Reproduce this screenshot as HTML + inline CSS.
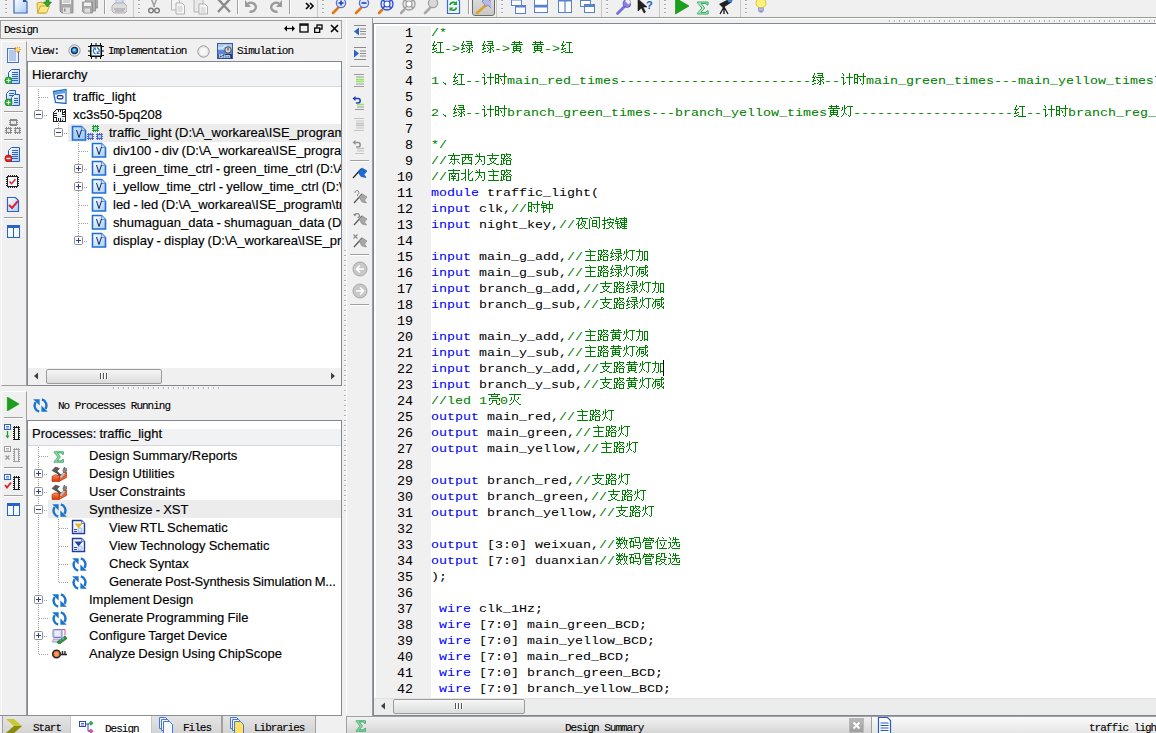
<!DOCTYPE html>
<html><head><meta charset="utf-8">
<style>
*{margin:0;padding:0;box-sizing:border-box}
html,body{width:1156px;height:733px;overflow:hidden;background:#f0f0f0;position:relative;font-family:"Liberation Sans",sans-serif;font-size:13px;color:#000}
.a{position:absolute}
.mono{white-space:nowrap;font-family:"Liberation Mono",monospace;font-size:11px;letter-spacing:-1px;line-height:12px;-webkit-text-stroke:.1px #000}
svg{display:block}
/* code */
#ed{position:absolute;left:373px;top:23px;width:783px;height:693px;background:#fff;border-top:1px solid #7e8793;border-left:1px solid #7e8793;border-bottom:1px solid #7e8793;overflow:hidden}
#gut{position:absolute;left:376px;top:26px;width:55px;height:672px;background:#f0f0f0}
.ln{position:absolute;left:0;width:1156px;height:16px;line-height:16px;white-space:pre}
.ln b{position:absolute;left:374px;top:2px;width:39px;text-align:right;font-weight:normal;font-family:"Liberation Mono",monospace;font-size:13.3333px;color:#000;-webkit-text-stroke:.05px #000}
.ln p{position:absolute;left:431px;top:1px;font-family:"Liberation Mono",monospace;font-size:13.3333px;color:#000;-webkit-text-stroke:.05px currentColor}
.k{color:#0000ff}.c{color:#008000}.t{color:#000}
.ln p i{display:inline-block;font-style:normal;transform:scaleY(.84);transform-origin:0 11.56px}
.cj{display:inline-block;width:13px;height:16px;vertical-align:top;fill:#008000}
/* tree */
.tr{position:absolute;height:20px;line-height:20px;white-space:nowrap;font-size:13px;color:#000;word-spacing:-.5px;-webkit-text-stroke:.15px #000}
.dl{position:absolute;border-left:1px dotted #a0a0a0}
.dh{position:absolute;border-top:1px dotted #a0a0a0}
.pm{position:absolute;width:9px;height:9px;border:1px solid #919191;border-radius:1px;background:linear-gradient(#fff,#e6e6e6)}
.pm:before{content:"";position:absolute;left:1px;top:3px;width:5px;height:1px;background:#2d4fa3}
.pm.p:after{content:"";position:absolute;left:3px;top:1px;width:1px;height:5px;background:#2d4fa3}
</style></head><body>
<svg width="0" height="0" style="position:absolute"><defs><symbol id="g0" viewBox="0 0 13 16"><path transform="translate(1,-2)" d="M2 2h1v1h-1zM2 3h1v1h-1zM5 3h6v1h-6zM1 4h1v1h-1zM8 4h1v1h-1zM1 5h1v1h-1zM4 5h1v1h-1zM8 5h1v1h-1zM0 6h4v1h-4zM8 6h1v1h-1zM2 7h1v1h-1zM8 7h1v1h-1zM1 8h1v1h-1zM8 8h1v1h-1zM1 9h1v1h-1zM3 9h2v1h-2zM8 9h1v1h-1zM0 10h3v1h-3zM8 10h1v1h-1zM4 11h1v1h-1zM8 11h1v1h-1zM2 12h2v1h-2zM8 12h1v1h-1zM0 13h2v1h-2zM4 13h8v1h-8z"/></symbol><symbol id="g1" viewBox="0 0 13 16"><path transform="translate(1,-2)" d="M2 2h1v1h-1zM5 2h6v1h-6zM2 3h1v1h-1zM10 3h1v1h-1zM1 4h1v1h-1zM6 4h5v1h-5zM1 5h1v1h-1zM3 5h1v1h-1zM10 5h1v1h-1zM0 6h3v1h-3zM4 6h8v1h-8zM2 7h1v1h-1zM8 7h1v1h-1zM1 8h1v1h-1zM5 8h1v1h-1zM8 8h1v1h-1zM10 8h2v1h-2zM1 9h3v1h-3zM6 9h1v1h-1zM8 9h2v1h-2zM0 10h2v1h-2zM7 10h2v1h-2zM10 10h1v1h-1zM6 11h1v1h-1zM8 11h1v1h-1zM11 11h1v1h-1zM2 12h2v1h-2zM5 12h1v1h-1zM8 12h1v1h-1zM11 12h1v1h-1zM0 13h2v1h-2zM7 13h2v1h-2z"/></symbol><symbol id="g2" viewBox="0 0 13 16"><path transform="translate(1,-2)" d="M3 2h1v1h-1zM8 2h1v1h-1zM1 3h10v1h-10zM3 4h1v1h-1zM8 4h1v1h-1zM0 5h12v1h-12zM5 6h1v1h-1zM2 7h8v1h-8zM2 8h1v1h-1zM5 8h1v1h-1zM9 8h1v1h-1zM2 9h8v1h-8zM2 10h1v1h-1zM5 10h1v1h-1zM9 10h1v1h-1zM2 11h8v1h-8zM3 12h1v1h-1zM8 12h1v1h-1zM1 13h2v1h-2zM9 13h2v1h-2z"/></symbol><symbol id="g3" viewBox="0 0 13 16"><path transform="translate(1,-2)" d="M3 11h1v1h-1zM4 12h2v1h-2zM5 13h1v1h-1z"/></symbol><symbol id="g4" viewBox="0 0 13 16"><path transform="translate(1,-2)" d="M1 2h1v1h-1zM8 2h1v1h-1zM2 3h1v1h-1zM8 3h1v1h-1zM2 4h1v1h-1zM8 4h1v1h-1zM8 5h1v1h-1zM0 6h3v1h-3zM5 6h7v1h-7zM2 7h1v1h-1zM8 7h1v1h-1zM2 8h1v1h-1zM8 8h1v1h-1zM2 9h1v1h-1zM8 9h1v1h-1zM2 10h1v1h-1zM8 10h1v1h-1zM2 11h1v1h-1zM4 11h1v1h-1zM8 11h1v1h-1zM2 12h2v1h-2zM8 12h1v1h-1zM2 13h1v1h-1zM8 13h1v1h-1z"/></symbol><symbol id="g5" viewBox="0 0 13 16"><path transform="translate(1,-2)" d="M9 2h1v1h-1zM0 3h4v1h-4zM9 3h1v1h-1zM0 4h1v1h-1zM3 4h1v1h-1zM9 4h1v1h-1zM0 5h1v1h-1zM3 5h9v1h-9zM0 6h1v1h-1zM3 6h1v1h-1zM9 6h1v1h-1zM0 7h4v1h-4zM5 7h1v1h-1zM9 7h1v1h-1zM0 8h1v1h-1zM3 8h1v1h-1zM6 8h1v1h-1zM9 8h1v1h-1zM0 9h1v1h-1zM3 9h1v1h-1zM6 9h1v1h-1zM9 9h1v1h-1zM0 10h1v1h-1zM3 10h1v1h-1zM9 10h1v1h-1zM0 11h4v1h-4zM9 11h1v1h-1zM0 12h1v1h-1zM3 12h1v1h-1zM7 12h1v1h-1zM9 12h1v1h-1zM8 13h1v1h-1z"/></symbol><symbol id="g6" viewBox="0 0 13 16"><path transform="translate(1,-2)" d="M3 2h1v1h-1zM3 3h1v1h-1zM6 3h6v1h-6zM1 4h1v1h-1zM3 4h1v1h-1zM5 4h1v1h-1zM9 4h1v1h-1zM1 5h1v1h-1zM3 5h2v1h-2zM9 5h1v1h-1zM1 6h1v1h-1zM3 6h1v1h-1zM9 6h1v1h-1zM0 7h1v1h-1zM3 7h1v1h-1zM9 7h1v1h-1zM3 8h1v1h-1zM9 8h1v1h-1zM3 9h1v1h-1zM9 9h1v1h-1zM2 10h1v1h-1zM4 10h1v1h-1zM9 10h1v1h-1zM2 11h1v1h-1zM5 11h1v1h-1zM9 11h1v1h-1zM1 12h1v1h-1zM7 12h1v1h-1zM9 12h1v1h-1zM0 13h1v1h-1zM8 13h1v1h-1z"/></symbol><symbol id="g7" viewBox="0 0 13 16"><path transform="translate(1,-2)" d="M5 2h1v1h-1zM5 3h1v1h-1zM0 4h12v1h-12zM4 5h1v1h-1zM6 5h1v1h-1zM3 6h1v1h-1zM6 6h1v1h-1zM3 7h1v1h-1zM6 7h1v1h-1zM2 8h9v1h-9zM6 9h1v1h-1zM3 10h1v1h-1zM6 10h1v1h-1zM9 10h1v1h-1zM2 11h1v1h-1zM6 11h1v1h-1zM10 11h1v1h-1zM1 12h1v1h-1zM4 12h1v1h-1zM6 12h1v1h-1zM11 12h1v1h-1zM5 13h1v1h-1z"/></symbol><symbol id="g8" viewBox="0 0 13 16"><path transform="translate(1,-2)" d="M0 3h12v1h-12zM4 4h1v1h-1zM7 4h1v1h-1zM4 5h1v1h-1zM7 5h1v1h-1zM1 6h10v1h-10zM1 7h1v1h-1zM4 7h1v1h-1zM7 7h1v1h-1zM10 7h1v1h-1zM1 8h1v1h-1zM4 8h1v1h-1zM7 8h1v1h-1zM10 8h1v1h-1zM1 9h1v1h-1zM3 9h1v1h-1zM8 9h3v1h-3zM1 10h2v1h-2zM10 10h1v1h-1zM1 11h1v1h-1zM10 11h1v1h-1zM1 12h10v1h-10zM1 13h1v1h-1zM10 13h1v1h-1z"/></symbol><symbol id="g9" viewBox="0 0 13 16"><path transform="translate(1,-2)" d="M5 2h1v1h-1zM2 3h1v1h-1zM5 3h1v1h-1zM3 4h1v1h-1zM5 4h1v1h-1zM1 5h10v1h-10zM5 6h1v1h-1zM10 6h1v1h-1zM5 7h1v1h-1zM10 7h1v1h-1zM5 8h2v1h-2zM10 8h1v1h-1zM4 9h1v1h-1zM7 9h1v1h-1zM10 9h1v1h-1zM4 10h1v1h-1zM7 10h1v1h-1zM10 10h1v1h-1zM3 11h1v1h-1zM10 11h1v1h-1zM2 12h1v1h-1zM10 12h1v1h-1zM1 13h1v1h-1zM8 13h2v1h-2z"/></symbol><symbol id="g10" viewBox="0 0 13 16"><path transform="translate(1,-2)" d="M5 2h1v1h-1zM5 3h1v1h-1zM0 4h12v1h-12zM5 5h1v1h-1zM5 6h1v1h-1zM2 7h8v1h-8zM3 8h1v1h-1zM8 8h1v1h-1zM3 9h1v1h-1zM7 9h1v1h-1zM4 10h1v1h-1zM6 10h1v1h-1zM5 11h2v1h-2zM3 12h2v1h-2zM7 12h2v1h-2zM0 13h3v1h-3zM9 13h3v1h-3z"/></symbol><symbol id="g11" viewBox="0 0 13 16"><path transform="translate(1,-2)" d="M6 2h1v1h-1zM1 3h4v1h-4zM6 3h5v1h-5zM1 4h1v1h-1zM4 4h1v1h-1zM6 4h1v1h-1zM10 4h1v1h-1zM1 5h1v1h-1zM4 5h2v1h-2zM7 5h1v1h-1zM9 5h1v1h-1zM1 6h1v1h-1zM4 6h1v1h-1zM8 6h1v1h-1zM1 7h4v1h-4zM6 7h2v1h-2zM9 7h2v1h-2zM3 8h1v1h-1zM5 8h1v1h-1zM11 8h1v1h-1zM1 9h1v1h-1zM3 9h2v1h-2zM6 9h5v1h-5zM1 10h1v1h-1zM3 10h1v1h-1zM6 10h1v1h-1zM10 10h1v1h-1zM1 11h1v1h-1zM3 11h1v1h-1zM6 11h1v1h-1zM10 11h1v1h-1zM1 12h1v1h-1zM3 12h2v1h-2zM6 12h1v1h-1zM10 12h1v1h-1zM0 13h3v1h-3zM6 13h5v1h-5z"/></symbol><symbol id="g12" viewBox="0 0 13 16"><path transform="translate(1,-2)" d="M5 2h1v1h-1zM0 3h12v1h-12zM5 4h1v1h-1zM5 5h1v1h-1zM1 6h10v1h-10zM1 7h1v1h-1zM3 7h1v1h-1zM7 7h1v1h-1zM10 7h1v1h-1zM1 8h1v1h-1zM4 8h1v1h-1zM6 8h1v1h-1zM10 8h1v1h-1zM1 9h1v1h-1zM3 9h5v1h-5zM10 9h1v1h-1zM1 10h1v1h-1zM5 10h1v1h-1zM10 10h1v1h-1zM1 11h1v1h-1zM3 11h5v1h-5zM10 11h1v1h-1zM1 12h1v1h-1zM5 12h1v1h-1zM10 12h1v1h-1zM1 13h1v1h-1zM5 13h1v1h-1zM8 13h3v1h-3z"/></symbol><symbol id="g13" viewBox="0 0 13 16"><path transform="translate(1,-2)" d="M4 2h1v1h-1zM7 2h1v1h-1zM4 3h1v1h-1zM7 3h1v1h-1zM4 4h1v1h-1zM7 4h1v1h-1zM11 4h1v1h-1zM4 5h1v1h-1zM7 5h1v1h-1zM10 5h1v1h-1zM0 6h5v1h-5zM7 6h1v1h-1zM9 6h1v1h-1zM4 7h1v1h-1zM7 7h2v1h-2zM4 8h1v1h-1zM7 8h1v1h-1zM4 9h1v1h-1zM7 9h1v1h-1zM3 10h2v1h-2zM7 10h1v1h-1zM2 11h1v1h-1zM4 11h1v1h-1zM7 11h1v1h-1zM11 11h1v1h-1zM0 12h2v1h-2zM4 12h1v1h-1zM7 12h1v1h-1zM11 12h1v1h-1zM4 13h1v1h-1zM8 13h4v1h-4z"/></symbol><symbol id="g14" viewBox="0 0 13 16"><path transform="translate(1,-2)" d="M5 2h1v1h-1zM6 3h1v1h-1zM1 4h11v1h-11zM6 5h1v1h-1zM6 6h1v1h-1zM6 7h1v1h-1zM2 8h9v1h-9zM6 9h1v1h-1zM6 10h1v1h-1zM6 11h1v1h-1zM6 12h1v1h-1zM1 13h11v1h-11z"/></symbol><symbol id="g15" viewBox="0 0 13 16"><path transform="translate(1,-2)" d="M1 2h1v1h-1zM8 2h1v1h-1zM1 3h1v1h-1zM8 3h1v1h-1zM1 4h4v1h-4zM8 4h1v1h-1zM0 5h1v1h-1zM5 5h7v1h-7zM0 6h6v1h-6zM8 6h1v1h-1zM11 6h1v1h-1zM2 7h1v1h-1zM5 7h1v1h-1zM8 7h1v1h-1zM11 7h1v1h-1zM0 8h6v1h-6zM8 8h1v1h-1zM11 8h1v1h-1zM2 9h1v1h-1zM5 9h7v1h-7zM2 10h1v1h-1zM8 10h1v1h-1zM2 11h1v1h-1zM4 11h1v1h-1zM8 11h1v1h-1zM2 12h2v1h-2zM8 12h1v1h-1zM2 13h1v1h-1zM8 13h1v1h-1z"/></symbol><symbol id="g16" viewBox="0 0 13 16"><path transform="translate(1,-2)" d="M5 2h1v1h-1zM0 3h12v1h-12zM3 4h1v1h-1zM6 4h1v1h-1zM3 5h1v1h-1zM6 5h1v1h-1zM2 6h1v1h-1zM6 6h4v1h-4zM2 7h1v1h-1zM5 7h1v1h-1zM9 7h1v1h-1zM1 8h2v1h-2zM5 8h1v1h-1zM7 8h1v1h-1zM9 8h1v1h-1zM0 9h1v1h-1zM2 9h1v1h-1zM4 9h2v1h-2zM8 9h1v1h-1zM2 10h2v1h-2zM6 10h1v1h-1zM8 10h1v1h-1zM2 11h1v1h-1zM7 11h1v1h-1zM2 12h1v1h-1zM6 12h1v1h-1zM8 12h1v1h-1zM2 13h1v1h-1zM4 13h2v1h-2zM9 13h3v1h-3z"/></symbol><symbol id="g17" viewBox="0 0 13 16"><path transform="translate(1,-2)" d="M1 2h1v1h-1zM4 2h7v1h-7zM2 3h1v1h-1zM10 3h1v1h-1zM0 4h1v1h-1zM10 4h1v1h-1zM0 5h1v1h-1zM3 5h5v1h-5zM10 5h1v1h-1zM0 6h1v1h-1zM3 6h1v1h-1zM7 6h1v1h-1zM10 6h1v1h-1zM0 7h1v1h-1zM3 7h1v1h-1zM7 7h1v1h-1zM10 7h1v1h-1zM0 8h1v1h-1zM3 8h5v1h-5zM10 8h1v1h-1zM0 9h1v1h-1zM3 9h1v1h-1zM7 9h1v1h-1zM10 9h1v1h-1zM0 10h1v1h-1zM3 10h1v1h-1zM7 10h1v1h-1zM10 10h1v1h-1zM0 11h1v1h-1zM3 11h5v1h-5zM10 11h1v1h-1zM0 12h1v1h-1zM8 12h1v1h-1zM10 12h1v1h-1zM0 13h1v1h-1zM9 13h1v1h-1z"/></symbol><symbol id="g18" viewBox="0 0 13 16"><path transform="translate(1,-2)" d="M2 2h1v1h-1zM7 2h1v1h-1zM2 3h1v1h-1zM8 3h1v1h-1zM2 4h1v1h-1zM5 4h7v1h-7zM0 5h6v1h-6zM11 5h1v1h-1zM2 6h1v1h-1zM8 6h1v1h-1zM2 7h1v1h-1zM5 7h7v1h-7zM2 8h2v1h-2zM7 8h1v1h-1zM10 8h1v1h-1zM0 9h3v1h-3zM6 9h1v1h-1zM10 9h1v1h-1zM2 10h1v1h-1zM7 10h1v1h-1zM9 10h1v1h-1zM2 11h1v1h-1zM8 11h2v1h-2zM2 12h1v1h-1zM7 12h1v1h-1zM10 12h1v1h-1zM1 13h2v1h-2zM4 13h3v1h-3zM11 13h1v1h-1z"/></symbol><symbol id="g19" viewBox="0 0 13 16"><path transform="translate(1,-2)" d="M1 2h1v1h-1zM9 2h1v1h-1zM1 3h1v1h-1zM4 3h8v1h-8zM1 4h3v1h-3zM6 4h1v1h-1zM9 4h1v1h-1zM11 4h1v1h-1zM0 5h1v1h-1zM5 5h1v1h-1zM7 5h5v1h-5zM0 6h4v1h-4zM5 6h1v1h-1zM9 6h1v1h-1zM11 6h1v1h-1zM2 7h1v1h-1zM5 7h7v1h-7zM0 8h5v1h-5zM6 8h1v1h-1zM9 8h1v1h-1zM2 9h1v1h-1zM6 9h6v1h-6zM2 10h1v1h-1zM4 10h1v1h-1zM6 10h1v1h-1zM9 10h1v1h-1zM2 11h1v1h-1zM5 11h1v1h-1zM7 11h5v1h-5zM2 12h2v1h-2zM5 12h2v1h-2zM9 12h1v1h-1zM2 13h1v1h-1zM4 13h1v1h-1zM7 13h5v1h-5z"/></symbol><symbol id="g20" viewBox="0 0 13 16"><path transform="translate(1,-2)" d="M3 2h1v1h-1zM3 3h1v1h-1zM0 4h7v1h-7zM8 4h4v1h-4zM3 5h1v1h-1zM6 5h1v1h-1zM8 5h1v1h-1zM11 5h1v1h-1zM3 6h1v1h-1zM6 6h1v1h-1zM8 6h1v1h-1zM11 6h1v1h-1zM3 7h1v1h-1zM6 7h1v1h-1zM8 7h1v1h-1zM11 7h1v1h-1zM3 8h1v1h-1zM6 8h1v1h-1zM8 8h1v1h-1zM11 8h1v1h-1zM2 9h1v1h-1zM6 9h1v1h-1zM8 9h1v1h-1zM11 9h1v1h-1zM2 10h1v1h-1zM6 10h1v1h-1zM8 10h1v1h-1zM11 10h1v1h-1zM2 11h1v1h-1zM6 11h1v1h-1zM8 11h1v1h-1zM11 11h1v1h-1zM1 12h1v1h-1zM6 12h1v1h-1zM8 12h4v1h-4zM0 13h1v1h-1zM4 13h2v1h-2zM8 13h1v1h-1zM11 13h1v1h-1z"/></symbol><symbol id="g21" viewBox="0 0 13 16"><path transform="translate(1,-2)" d="M9 2h2v1h-2zM0 3h1v1h-1zM9 3h1v1h-1zM11 3h1v1h-1zM1 4h1v1h-1zM3 4h9v1h-9zM3 5h1v1h-1zM9 5h1v1h-1zM2 6h6v1h-6zM9 6h1v1h-1zM1 7h1v1h-1zM3 7h1v1h-1zM9 7h1v1h-1zM11 7h1v1h-1zM1 8h1v1h-1zM3 8h1v1h-1zM5 8h3v1h-3zM9 8h1v1h-1zM11 8h1v1h-1zM0 9h1v1h-1zM3 9h1v1h-1zM5 9h1v1h-1zM7 9h1v1h-1zM9 9h2v1h-2zM0 10h1v1h-1zM3 10h1v1h-1zM5 10h3v1h-3zM9 10h1v1h-1zM0 11h1v1h-1zM3 11h1v1h-1zM8 11h2v1h-2zM11 11h1v1h-1zM2 12h1v1h-1zM7 12h1v1h-1zM10 12h2v1h-2zM1 13h1v1h-1zM5 13h2v1h-2zM11 13h1v1h-1z"/></symbol><symbol id="g22" viewBox="0 0 13 16"><path transform="translate(1,-2)" d="M6 2h1v1h-1zM0 3h12v1h-12zM3 4h1v1h-1zM9 4h1v1h-1zM3 5h7v1h-7zM1 7h11v1h-11zM1 8h1v1h-1zM11 8h1v1h-1zM1 9h1v1h-1zM4 9h5v1h-5zM11 9h1v1h-1zM4 10h1v1h-1zM8 10h1v1h-1zM4 11h1v1h-1zM8 11h1v1h-1zM3 12h1v1h-1zM8 12h1v1h-1zM11 12h1v1h-1zM1 13h2v1h-2zM9 13h3v1h-3z"/></symbol><symbol id="g23" viewBox="0 0 13 16"><path transform="translate(1,-2)" d="M0 3h12v1h-12zM5 4h1v1h-1zM5 5h1v1h-1zM2 6h1v1h-1zM5 6h1v1h-1zM9 6h1v1h-1zM2 7h1v1h-1zM5 7h1v1h-1zM9 7h1v1h-1zM2 8h1v1h-1zM5 8h1v1h-1zM8 8h1v1h-1zM1 9h1v1h-1zM4 9h1v1h-1zM6 9h1v1h-1zM4 10h1v1h-1zM7 10h1v1h-1zM3 11h1v1h-1zM8 11h1v1h-1zM2 12h1v1h-1zM9 12h1v1h-1zM0 13h2v1h-2zM10 13h2v1h-2z"/></symbol><symbol id="g24" viewBox="0 0 13 16"><path transform="translate(1,-2)" d="M0 2h1v1h-1zM3 2h1v1h-1zM6 2h1v1h-1zM8 2h1v1h-1zM1 3h1v1h-1zM3 3h1v1h-1zM5 3h1v1h-1zM8 3h1v1h-1zM0 4h7v1h-7zM8 4h1v1h-1zM2 5h3v1h-3zM7 5h5v1h-5zM1 6h1v1h-1zM3 6h1v1h-1zM5 6h1v1h-1zM7 6h1v1h-1zM10 6h1v1h-1zM0 7h1v1h-1zM3 7h1v1h-1zM6 7h1v1h-1zM8 7h1v1h-1zM10 7h1v1h-1zM0 8h7v1h-7zM8 8h1v1h-1zM10 8h1v1h-1zM2 9h1v1h-1zM4 9h1v1h-1zM8 9h1v1h-1zM10 9h1v1h-1zM1 10h1v1h-1zM4 10h1v1h-1zM9 10h1v1h-1zM2 11h2v1h-2zM9 11h1v1h-1zM2 12h1v1h-1zM4 12h1v1h-1zM8 12h1v1h-1zM10 12h1v1h-1zM0 13h2v1h-2zM5 13h1v1h-1zM7 13h1v1h-1zM11 13h1v1h-1z"/></symbol><symbol id="g25" viewBox="0 0 13 16"><path transform="translate(1,-2)" d="M5 2h6v1h-6zM0 3h5v1h-5zM10 3h1v1h-1zM2 4h1v1h-1zM6 4h1v1h-1zM10 4h1v1h-1zM2 5h1v1h-1zM6 5h1v1h-1zM10 5h1v1h-1zM1 6h4v1h-4zM6 6h1v1h-1zM10 6h1v1h-1zM0 7h2v1h-2zM4 7h1v1h-1zM6 7h6v1h-6zM1 8h1v1h-1zM4 8h1v1h-1zM11 8h1v1h-1zM1 9h1v1h-1zM4 9h1v1h-1zM11 9h1v1h-1zM1 10h1v1h-1zM4 10h6v1h-6zM11 10h1v1h-1zM1 11h4v1h-4zM11 11h1v1h-1zM1 12h1v1h-1zM4 12h1v1h-1zM8 12h1v1h-1zM11 12h1v1h-1zM9 13h2v1h-2z"/></symbol><symbol id="g26" viewBox="0 0 13 16"><path transform="translate(1,-2)" d="M2 2h1v1h-1zM7 2h1v1h-1zM2 3h4v1h-4zM7 3h5v1h-5zM1 4h1v1h-1zM4 4h1v1h-1zM6 4h1v1h-1zM9 4h1v1h-1zM1 5h11v1h-11zM1 6h1v1h-1zM11 6h1v1h-1zM0 7h1v1h-1zM3 7h6v1h-6zM10 7h1v1h-1zM3 8h1v1h-1zM8 8h1v1h-1zM3 9h6v1h-6zM3 10h1v1h-1zM3 11h7v1h-7zM3 12h1v1h-1zM9 12h1v1h-1zM3 13h7v1h-7z"/></symbol><symbol id="g27" viewBox="0 0 13 16"><path transform="translate(1,-2)" d="M3 2h1v1h-1zM7 2h1v1h-1zM3 3h1v1h-1zM8 3h1v1h-1zM2 4h1v1h-1zM2 5h1v1h-1zM4 5h8v1h-8zM1 6h2v1h-2zM0 7h1v1h-1zM2 7h1v1h-1zM5 7h1v1h-1zM9 7h1v1h-1zM2 8h1v1h-1zM5 8h1v1h-1zM9 8h1v1h-1zM2 9h1v1h-1zM6 9h1v1h-1zM9 9h1v1h-1zM2 10h1v1h-1zM6 10h1v1h-1zM8 10h1v1h-1zM2 11h1v1h-1zM8 11h1v1h-1zM2 12h1v1h-1zM7 12h1v1h-1zM2 13h1v1h-1zM4 13h8v1h-8z"/></symbol><symbol id="g28" viewBox="0 0 13 16"><path transform="translate(1,-2)" d="M1 2h1v1h-1zM5 2h1v1h-1zM7 2h1v1h-1zM2 3h1v1h-1zM5 3h1v1h-1zM7 3h1v1h-1zM2 4h1v1h-1zM5 4h6v1h-6zM4 5h1v1h-1zM7 5h1v1h-1zM7 6h1v1h-1zM0 7h3v1h-3zM4 7h8v1h-8zM2 8h1v1h-1zM6 8h1v1h-1zM8 8h1v1h-1zM2 9h1v1h-1zM6 9h1v1h-1zM8 9h1v1h-1zM11 9h1v1h-1zM2 10h1v1h-1zM5 10h1v1h-1zM8 10h1v1h-1zM11 10h1v1h-1zM2 11h1v1h-1zM4 11h1v1h-1zM9 11h3v1h-3zM1 12h1v1h-1zM3 12h1v1h-1zM0 13h1v1h-1zM4 13h8v1h-8z"/></symbol><symbol id="g29" viewBox="0 0 13 16"><path transform="translate(1,-2)" d="M3 2h2v1h-2zM6 2h4v1h-4zM1 3h2v1h-2zM6 3h1v1h-1zM9 3h1v1h-1zM1 4h1v1h-1zM6 4h1v1h-1zM9 4h1v1h-1zM1 5h4v1h-4zM6 5h1v1h-1zM9 5h1v1h-1zM1 6h1v1h-1zM5 6h1v1h-1zM9 6h3v1h-3zM1 7h4v1h-4zM1 8h1v1h-1zM5 8h6v1h-6zM1 9h1v1h-1zM5 9h1v1h-1zM9 9h1v1h-1zM1 10h4v1h-4zM6 10h1v1h-1zM9 10h1v1h-1zM0 11h2v1h-2zM7 11h2v1h-2zM1 12h1v1h-1zM6 12h1v1h-1zM9 12h1v1h-1zM1 13h1v1h-1zM4 13h2v1h-2zM10 13h2v1h-2z"/></symbol>
<linearGradient id="gdoc" x1="0" y1="0" x2="1" y2="1"><stop offset="0" stop-color="#ffffff"/><stop offset="1" stop-color="#a9cdf5"/></linearGradient>
<linearGradient id="gdoc2" x1="0" y1="0" x2="1" y2="1"><stop offset="0" stop-color="#f4f9ff"/><stop offset="1" stop-color="#b8d6f6"/></linearGradient>
<linearGradient id="gsel" x1="0" y1="0" x2="0" y2="1"><stop offset="0" stop-color="#c4def8"/><stop offset="1" stop-color="#a4cbf2"/></linearGradient>
<linearGradient id="gfold" x1="0" y1="0" x2="1" y2="1"><stop offset="0" stop-color="#fff4a8"/><stop offset="1" stop-color="#e0a81e"/></linearGradient>
<linearGradient id="gthumb" x1="0" y1="0" x2="0" y2="1"><stop offset="0" stop-color="#f3f3f3"/><stop offset=".5" stop-color="#e4e4e4"/><stop offset="1" stop-color="#d2d2d2"/></linearGradient>
<radialGradient id="gradio" cx=".45" cy=".4" r=".6"><stop offset="0" stop-color="#9fe0ff"/><stop offset=".6" stop-color="#1f8ad8"/><stop offset="1" stop-color="#0b4f98"/></radialGradient>
<linearGradient id="gbox" x1="0" y1="0" x2="0" y2="1"><stop offset="0" stop-color="#ff8c4a"/><stop offset="1" stop-color="#d63a10"/></linearGradient>
</defs></svg>

<!-- ===== top toolbar ===== -->
<div class="a" style="left:5px;top:0px;width:2px;height:16px;background:repeating-linear-gradient(#a8a8a8 0 1px,#fff 1px 2px,transparent 2px 4px)"></div>
<div class="a" style="left:138px;top:0px;width:2px;height:16px;background:repeating-linear-gradient(#a8a8a8 0 1px,#fff 1px 2px,transparent 2px 4px)"></div>
<div class="a" style="left:322px;top:0px;width:2px;height:16px;background:repeating-linear-gradient(#a8a8a8 0 1px,#fff 1px 2px,transparent 2px 4px)"></div>
<div class="a" style="left:501px;top:0px;width:2px;height:16px;background:repeating-linear-gradient(#a8a8a8 0 1px,#fff 1px 2px,transparent 2px 4px)"></div>
<div class="a" style="left:606px;top:0px;width:2px;height:16px;background:repeating-linear-gradient(#a8a8a8 0 1px,#fff 1px 2px,transparent 2px 4px)"></div>
<div class="a" style="left:664px;top:0px;width:2px;height:16px;background:repeating-linear-gradient(#a8a8a8 0 1px,#fff 1px 2px,transparent 2px 4px)"></div>
<div class="a" style="left:745px;top:0px;width:2px;height:16px;background:repeating-linear-gradient(#a8a8a8 0 1px,#fff 1px 2px,transparent 2px 4px)"></div>
<div class="a" style="left:133px;top:0px;width:1px;height:17px;background:#c8c8c8"></div>
<div class="a" style="left:317px;top:0px;width:1px;height:17px;background:#c8c8c8"></div>
<div class="a" style="left:496px;top:0px;width:1px;height:17px;background:#c8c8c8"></div>
<div class="a" style="left:601px;top:0px;width:1px;height:17px;background:#c8c8c8"></div>
<div class="a" style="left:659px;top:0px;width:1px;height:17px;background:#c8c8c8"></div>
<div class="a" style="left:740px;top:0px;width:1px;height:17px;background:#c8c8c8"></div>
<div class="a" style="left:104px;top:0px;width:1px;height:14px;background:#a0a0a0"></div><div class="a" style="left:105px;top:0px;width:1px;height:14px;background:#fff"></div>
<div class="a" style="left:237px;top:0px;width:1px;height:14px;background:#a0a0a0"></div><div class="a" style="left:238px;top:0px;width:1px;height:14px;background:#fff"></div>
<div class="a" style="left:289px;top:0px;width:1px;height:14px;background:#a0a0a0"></div><div class="a" style="left:290px;top:0px;width:1px;height:14px;background:#fff"></div>
<div class="a" style="left:468px;top:0px;width:1px;height:14px;background:#a0a0a0"></div><div class="a" style="left:469px;top:0px;width:1px;height:14px;background:#fff"></div>
<div class="a" style="left:472px;top:-4px;width:23px;height:20px;border:1px solid #6a6a6a;border-radius:3px;background:linear-gradient(#dcdcdc,#c8c8c8)"></div>
<svg class="a" style="left:13px;top:0px" width="16" height="16" viewBox="0 0 16 16"><path d="M1 -2h9l4 4v11H1z" fill="url(#gdoc)" stroke="#3a66c0" stroke-width="1.2"/><path d="M10 -2v4h4z" fill="#2550b0"/></svg>
<svg class="a" style="left:36px;top:0px" width="16" height="16" viewBox="0 0 16 16"><path d="M1 3l5-1 1 1.5 5-1v2L9.5 13H1.5z" fill="#f5e27a" stroke="#c9a028" stroke-width=".9"/><path d="M1.5 13l3-7h9l-3 7z" fill="#ffe98a" stroke="#c9a028" stroke-width=".9"/><path d="M10 -2h3v4h2.5L11.5 7 7.5 2H10z" fill="#2fa82f" stroke="#1a7a1a" stroke-width=".6"/></svg>
<svg class="a" style="left:59px;top:0px" width="16" height="16" viewBox="0 0 16 16"><path d="M1 -2h13v15H3L1 11z" fill="#a8a8a8" stroke="#8a8a8a" stroke-width=".8"/><rect x="3" y="-2" width="9" height="6" fill="#f0f0f0"/><path d="M4 0h7M4 2h7" stroke="#b0b0b0"/><rect x="4" y="7.5" width="7" height="5.5" fill="#e0e0e0"/><rect x="5" y="8.5" width="1.5" height="3" fill="#909090"/></svg>
<svg class="a" style="left:82px;top:0px" width="16" height="16" viewBox="0 0 16 16"><path d="M6 -3h10v11H6z" fill="#a8a8a8" stroke="#8a8a8a" stroke-width=".8"/><path d="M3.5 -1h10v12h-10z" fill="#b0b0b0" stroke="#8a8a8a" stroke-width=".8"/><path d="M0.5 2h10v11H2l-1.5-1.5z" fill="#a8a8a8" stroke="#8a8a8a" stroke-width=".8"/><rect x="2" y="2.5" width="7" height="3.5" fill="#f0f0f0"/><rect x="2.5" y="8.5" width="5.5" height="4" fill="#e0e0e0"/></svg>
<svg class="a" style="left:111px;top:0px" width="16" height="16" viewBox="0 0 16 16"><rect x="5" y="-2" width="7" height="6" fill="#cfe0f5" stroke="#9ab0d0" stroke-width=".8"/><path d="M1 6l3-3h9l3 3v5l-2 2H3l-2-2z" fill="#dcdcdc" stroke="#a8a8a8" stroke-width=".9"/><path d="M3 9h11M4 11h9" stroke="#9a9a9a" stroke-width="1"/></svg>
<svg class="a" style="left:146px;top:0px" width="16" height="16" viewBox="0 0 16 16"><path d="M5 -2l3.5 9M11 -2L7.5 7" stroke="#a0a0a0" stroke-width="1.5"/><circle cx="5" cy="10.5" r="2.3" fill="none" stroke="#808080" stroke-width="1.5"/><circle cx="11" cy="10.5" r="2.3" fill="none" stroke="#808080" stroke-width="1.5"/></svg>
<svg class="a" style="left:170px;top:0px" width="16" height="16" viewBox="0 0 16 16"><path d="M1.5 -1h6l2 2v9h-8z" fill="#f4f4f4" stroke="#b0b0b0" stroke-width=".9"/><path d="M6 3h6l2.5 2.5V14H6z" fill="#f8f8f8" stroke="#a8a8a8" stroke-width=".9"/><path d="M7.5 7h5M7.5 9h5M7.5 11h5" stroke="#c0c0c0" stroke-width=".9"/></svg>
<svg class="a" style="left:193px;top:0px" width="16" height="16" viewBox="0 0 16 16"><path d="M1 -1h9v13H1z" fill="#e8e8e8" stroke="#b0b0b0" stroke-width=".9"/><path d="M6 4h6l2.5 2.5V14H6z" fill="#f8f8f8" stroke="#a8a8a8" stroke-width=".9"/><path d="M7.5 8h5M7.5 10h5M7.5 12h5" stroke="#c0c0c0" stroke-width=".9"/></svg>
<svg class="a" style="left:216px;top:0px" width="16" height="16" viewBox="0 0 16 16"><path d="M2 -1l12 13M14 -1L2 12" stroke="#8c8c8c" stroke-width="2.4"/></svg>
<svg class="a" style="left:244px;top:0px" width="16" height="16" viewBox="0 0 16 16"><path d="M4 3.5a5 4.5 0 1 1 1.5 8" fill="none" stroke="#9a9a9a" stroke-width="2.4"/><path d="M1 0v7h6z" fill="#9a9a9a"/></svg>
<svg class="a" style="left:267px;top:0px" width="16" height="16" viewBox="0 0 16 16"><path d="M12 3.5a5 4.5 0 1 0 -1.5 8" fill="none" stroke="#9a9a9a" stroke-width="2.4"/><path d="M15 0v7H9z" fill="#9a9a9a"/></svg>
<svg class="a" style="left:331px;top:0px" width="16" height="16" viewBox="0 0 16 16"><path d="M2 13l5-5" stroke="#e07818" stroke-width="2.6" stroke-linecap="round"/><circle cx="10" cy="3" r="4.6" fill="#dde8ff" stroke="#5a6ed0" stroke-width="1.3"/><path d="M7.5 3h5" stroke="#2040c0" stroke-width="1.6"/><path d="M10 0.5v5" stroke="#2040c0" stroke-width="1.6"/></svg>
<svg class="a" style="left:354px;top:0px" width="16" height="16" viewBox="0 0 16 16"><path d="M2 13l5-5" stroke="#e07818" stroke-width="2.6" stroke-linecap="round"/><circle cx="10" cy="3" r="4.6" fill="#dde8ff" stroke="#5a6ed0" stroke-width="1.3"/><path d="M7.5 3h5" stroke="#2040c0" stroke-width="1.6"/></svg>
<svg class="a" style="left:378px;top:0px" width="16" height="16" viewBox="0 0 16 16"><path d="M1 13l3-3" stroke="#e07818" stroke-width="2.6" stroke-linecap="round"/><circle cx="9" cy="4" r="6" fill="#dde6ff" stroke="#3050d0" stroke-width="1.3"/><circle cx="9" cy="4" r="3" fill="#fff" stroke="#3050d0" stroke-width="1.2"/><path d="M4.5 -.5l2.5 2.5M13.5 -.5l-2.5 2.5M4.5 8.5l2.5-2.5M13.5 8.5l-2.5-2.5" stroke="#3050d0" stroke-width="1.6"/></svg>
<svg class="a" style="left:400px;top:0px" width="16" height="16" viewBox="0 0 16 16"><path d="M1 13l3-3" stroke="#a8a8a8" stroke-width="2.6" stroke-linecap="round"/><circle cx="9" cy="4" r="6" fill="#e8e8e8" stroke="#a0a0a0" stroke-width="1.3"/><circle cx="9" cy="4" r="3" fill="#fff" stroke="#a0a0a0" stroke-width="1.2"/><path d="M4.5 -.5l2.5 2.5M13.5 -.5l-2.5 2.5M4.5 8.5l2.5-2.5M13.5 8.5l-2.5-2.5" stroke="#a0a0a0" stroke-width="1.6"/></svg>
<svg class="a" style="left:423px;top:0px" width="16" height="16" viewBox="0 0 16 16"><path d="M2 13l5-5" stroke="#a8a8a8" stroke-width="2.6" stroke-linecap="round"/><circle cx="10" cy="3" r="4.6" fill="#d8d8d8" stroke="#a0a0a0" stroke-width="1.3"/></svg>
<svg class="a" style="left:446px;top:0px" width="16" height="16" viewBox="0 0 16 16"><path d="M1.5 -2h9l3 3v12.5h-12z" fill="#eef4ff" stroke="#3a6ad0" stroke-width="1.2"/><path d="M4 5a3.5 3.5 0 0 1 6-1.5" fill="none" stroke="#20a030" stroke-width="1.8"/><path d="M11 1v4H7z" fill="#20a030"/><path d="M10.5 7.5a3.5 3.5 0 0 1 -6 1.5" fill="none" stroke="#20a030" stroke-width="1.8"/><path d="M3.5 11.5v-4h4z" fill="#20a030"/></svg>
<svg class="a" style="left:510px;top:0px" width="16" height="16" viewBox="0 0 16 16"><rect x="1.5" y="-1.5" width="10" height="7" fill="#fff" stroke="#5a80d0"/><rect x="1.5" y="-1.5" width="10" height="2" fill="#5a80d0"/><rect x="5.5" y="5.5" width="10" height="8" fill="#fff" stroke="#5a80d0"/><rect x="5.5" y="5.5" width="10" height="2" fill="#5a80d0"/></svg>
<svg class="a" style="left:533px;top:0px" width="16" height="16" viewBox="0 0 16 16"><rect x="1.5" y="-1.5" width="13" height="14" fill="#fff" stroke="#5a80d0"/><path d="M1.5 5.5h13" stroke="#5a80d0" stroke-width="1.5"/><rect x="1.5" y="6" width="13" height="1.5" fill="#5a80d0"/></svg>
<svg class="a" style="left:557px;top:0px" width="16" height="16" viewBox="0 0 16 16"><rect x="1.5" y="-1.5" width="13" height="14" fill="#fff" stroke="#5a80d0"/><rect x="1.5" y="-1.5" width="13" height="3" fill="#5a80d0"/><path d="M8 0v13" stroke="#5a80d0" stroke-width="1.2"/></svg>
<svg class="a" style="left:579px;top:0px" width="16" height="16" viewBox="0 0 16 16"><rect x="1.5" y="-1.5" width="10" height="8" fill="#fff" stroke="#5a80d0"/><rect x="1.5" y="-1.5" width="10" height="2.5" fill="#5a80d0"/><rect x="5.5" y="4.5" width="10" height="8" fill="#fff" stroke="#5a80d0"/><rect x="5.5" y="4.5" width="10" height="2.5" fill="#5a80d0"/></svg>
<svg class="a" style="left:615px;top:0px" width="16" height="16" viewBox="0 0 16 16"><path d="M2.5 13.5L10 6" stroke="#7a70d8" stroke-width="2.8" stroke-linecap="round"/><circle cx="12" cy="3.5" r="4" fill="#8a80e8" stroke="#5a50b8" stroke-width=".7"/><path d="M12.5 -1.5l3.5 3.5-2.5 2.5-3.5-3.5z" fill="#f0f0f0"/></svg>
<svg class="a" style="left:637px;top:0px" width="16" height="16" viewBox="0 0 16 16"><path d="M1 -1l9 8H6l2.5 5-1.5 1-2.5-5L1 11z" fill="#222" stroke="#000" stroke-width=".5"/><text x="9" y="9" font-family="Liberation Sans" font-weight="bold" font-size="11" fill="#1a5ad0">?</text></svg>
<svg class="a" style="left:674px;top:0px" width="16" height="16" viewBox="0 0 16 16"><path d="M1.5 -2L15 6 1.5 14z" fill="#1aa01a" stroke="#108010" stroke-width=".6"/></svg>
<svg class="a" style="left:695px;top:0px" width="16" height="16" viewBox="0 0 16 16"><path d="M2.5 2h10.5v3h-1l-.8-1.6H6l3.6 4.6L5.8 12.4h5.4l.9-1.6h1V14H2.5v-.8L7 8 2.5 2.8z" fill="#c8f0d0" stroke="#20a050" stroke-width=".9"/></svg>
<svg class="a" style="left:717px;top:0px" width="16" height="16" viewBox="0 0 16 16"><path d="M2 4l10-5 3 3-9 6z" fill="#222"/><circle cx="13" cy="0" r="2.5" fill="#3a80d0"/><path d="M7 7l-4 7M7 7l0 7M7 7l4 7" stroke="#111" stroke-width="1.3"/></svg>
<svg class="a" style="left:753px;top:0px" width="16" height="16" viewBox="0 0 16 16"><circle cx="8" cy="3" r="5" fill="#fff27a" stroke="#d8b820" stroke-width=".8"/><rect x="5.5" y="8" width="5" height="3" fill="#b0c0e8" stroke="#7a88c0" stroke-width=".6"/><rect x="6.5" y="11" width="3" height="1.5" fill="#7a88c0"/></svg>
<svg class="a" style="left:475px;top:0px" width="16" height="16" viewBox="0 0 16 16"><path d="M2 13L11 5" stroke="#e0a020" stroke-width="2.4" stroke-linecap="round"/><path d="M7 1l4-3 6 4 2 6-2 1-4-4-2 1.5z" fill="#b8b8e8" stroke="#7a7ab8" stroke-width=".8"/></svg>
<svg class="a" style="left:305px;top:2px" width="10" height="8" viewBox="0 0 10 8"><path d="M1 1l3 3-3 3M5 1l3 3-3 3" fill="none" stroke="#000" stroke-width="1.6"/></svg>
<div class="a" style="left:0;top:17px;width:1156px;height:1px;background:#9a9a9a"></div>
<div class="a" style="left:0;top:18px;width:1156px;height:1px;background:#fff"></div>

<!-- ===== left dock ===== -->
<div class="a" style="left:0;top:20px;width:342px;height:19px;border:1px solid #a0a0a0;background:#f0f0f0"></div>
<div class="a mono" style="left:4px;top:24px">Design</div>

<!-- left icon column top -->
<svg class="a" style="left:5px;top:47px" width="16" height="16" viewBox="0 0 16 16"><rect x="2.5" y="1.5" width="11" height="14" fill="#eaf3ff" stroke="#4a72c8" stroke-width="1"/><rect x="4" y="3" width="7" height="11" fill="#b4c8ea"/><path d="M12.5 -1v7M9 2.5h7M10 0l5 5M15 0l-5 5" stroke="#f5a040" stroke-width="1.1"/><circle cx="12.5" cy="2.5" r="1.8" fill="#ffe060"/></svg>
<svg class="a" style="left:4px;top:68px" width="16" height="16" viewBox="0 0 16 16"><path d="M7.5 1.5h8v14h-11v-11z" fill="url(#gdoc)" stroke="#2a5ac8" stroke-width="1"/><path d="M8 4.5H14M8 6.5H14M8 8.5H14M8 10.5H14M8 12.5H14" stroke="#2a62c8" stroke-width="1"/><circle cx="4.5" cy="12.5" r="3.6" fill="#2fae3a" stroke="#188a28" stroke-width=".7"/><path d="M2.5 12.5h4M4.5 10.5v4" stroke="#fff" stroke-width="1.2"/></svg>
<svg class="a" style="left:4px;top:90px" width="16" height="16" viewBox="0 0 16 16"><path d="M5.5 .5h6v9h-9v-6z" fill="url(#gdoc)" stroke="#2a5ac8" stroke-width="1"/><path d="M5 3.5H10M5 5.5H10" stroke="#2a62c8" stroke-width="1"/><path d="M10.5 4.5h5v11h-8v-8z" fill="url(#gdoc)" stroke="#2a5ac8" stroke-width="1"/><path d="M10 8.5H14M10 10.5H14M10 12.5H14" stroke="#2a62c8" stroke-width="1"/><circle cx="4.5" cy="12.5" r="3.6" fill="#2fae3a" stroke="#188a28" stroke-width=".7"/><path d="M2.5 12.5h4M4.5 10.5v4" stroke="#fff" stroke-width="1.2"/></svg>
<div class="a" style="left:4px;top:111px;width:19px;height:1px;background:#a0a0a0"></div><div class="a" style="left:4px;top:112px;width:19px;height:1px;background:#fff"></div>
<svg class="a" style="left:5px;top:118px" width="16" height="16" viewBox="0 0 16 16"><g transform="translate(4,1)"><g shape-rendering="crispEdges"><rect x="1" y="0" width="7" height="1" fill="#8a8a8a"/><rect x="0" y="1" width="9" height="1" fill="#8a8a8a"/><rect x="1" y="2" width="1" height="1" fill="#8a8a8a"/><rect x="3" y="2" width="3" height="1" fill="#e6e6e6"/><rect x="7" y="2" width="1" height="1" fill="#8a8a8a"/><rect x="0" y="3" width="2" height="1" fill="#8a8a8a"/><rect x="3" y="3" width="3" height="1" fill="#e6e6e6"/><rect x="7" y="3" width="2" height="1" fill="#8a8a8a"/><rect x="1" y="4" width="1" height="1" fill="#8a8a8a"/><rect x="3" y="4" width="3" height="1" fill="#e6e6e6"/><rect x="7" y="4" width="1" height="1" fill="#8a8a8a"/><rect x="0" y="5" width="9" height="1" fill="#8a8a8a"/><rect x="1" y="6" width="7" height="1" fill="#8a8a8a"/></g></g><g transform="translate(0,9)"><g shape-rendering="crispEdges"><rect x="1" y="0" width="1" height="1" fill="#8a8a8a"/><rect x="3" y="0" width="1" height="1" fill="#8a8a8a"/><rect x="5" y="0" width="1" height="1" fill="#8a8a8a"/><rect x="0" y="1" width="7" height="1" fill="#8a8a8a"/><rect x="1" y="2" width="1" height="1" fill="#8a8a8a"/><rect x="2" y="2" width="3" height="1" fill="#e6e6e6"/><rect x="5" y="2" width="1" height="1" fill="#8a8a8a"/><rect x="0" y="3" width="2" height="1" fill="#8a8a8a"/><rect x="2" y="3" width="3" height="1" fill="#e6e6e6"/><rect x="5" y="3" width="2" height="1" fill="#8a8a8a"/><rect x="1" y="4" width="1" height="1" fill="#8a8a8a"/><rect x="2" y="4" width="3" height="1" fill="#e6e6e6"/><rect x="5" y="4" width="1" height="1" fill="#8a8a8a"/><rect x="0" y="5" width="7" height="1" fill="#8a8a8a"/><rect x="1" y="6" width="1" height="1" fill="#8a8a8a"/><rect x="3" y="6" width="1" height="1" fill="#8a8a8a"/><rect x="5" y="6" width="1" height="1" fill="#8a8a8a"/></g></g><g transform="translate(9,9)"><g shape-rendering="crispEdges"><rect x="1" y="0" width="1" height="1" fill="#8a8a8a"/><rect x="3" y="0" width="1" height="1" fill="#8a8a8a"/><rect x="5" y="0" width="1" height="1" fill="#8a8a8a"/><rect x="0" y="1" width="7" height="1" fill="#8a8a8a"/><rect x="1" y="2" width="1" height="1" fill="#8a8a8a"/><rect x="2" y="2" width="3" height="1" fill="#e6e6e6"/><rect x="5" y="2" width="1" height="1" fill="#8a8a8a"/><rect x="0" y="3" width="2" height="1" fill="#8a8a8a"/><rect x="2" y="3" width="3" height="1" fill="#e6e6e6"/><rect x="5" y="3" width="2" height="1" fill="#8a8a8a"/><rect x="1" y="4" width="1" height="1" fill="#8a8a8a"/><rect x="2" y="4" width="3" height="1" fill="#e6e6e6"/><rect x="5" y="4" width="1" height="1" fill="#8a8a8a"/><rect x="0" y="5" width="7" height="1" fill="#8a8a8a"/><rect x="1" y="6" width="1" height="1" fill="#8a8a8a"/><rect x="3" y="6" width="1" height="1" fill="#8a8a8a"/><rect x="5" y="6" width="1" height="1" fill="#8a8a8a"/></g></g></svg>
<div class="a" style="left:4px;top:139px;width:19px;height:1px;background:#a0a0a0"></div><div class="a" style="left:4px;top:140px;width:19px;height:1px;background:#fff"></div>
<svg class="a" style="left:4px;top:146px" width="16" height="16" viewBox="0 0 16 16"><path d="M7.5 1.5h8v14h-11v-11z" fill="url(#gdoc)" stroke="#2a5ac8" stroke-width="1"/><path d="M8 4.5H14M8 6.5H14M8 8.5H14M8 10.5H14M8 12.5H14" stroke="#2a62c8" stroke-width="1"/><circle cx="4.5" cy="12.5" r="3.6" fill="#e02020" stroke="#a81010" stroke-width=".7"/><path d="M2.5 12.5h4" stroke="#fff" stroke-width="1.4"/></svg>
<div class="a" style="left:4px;top:167px;width:19px;height:1px;background:#a0a0a0"></div><div class="a" style="left:4px;top:168px;width:19px;height:1px;background:#fff"></div>
<svg class="a" style="left:6px;top:175px" width="13" height="13" viewBox="0 0 13 13"><g shape-rendering="crispEdges"><rect x="2" y="0" width="1" height="1" fill="#222"/><rect x="4" y="0" width="1" height="1" fill="#222"/><rect x="6" y="0" width="1" height="1" fill="#222"/><rect x="8" y="0" width="1" height="1" fill="#222"/><rect x="10" y="0" width="1" height="1" fill="#222"/><rect x="1" y="1" width="11" height="1" fill="#222"/><rect x="0" y="2" width="2" height="1" fill="#222"/><rect x="11" y="2" width="2" height="1" fill="#222"/><rect x="1" y="3" width="1" height="1" fill="#222"/><rect x="11" y="3" width="1" height="1" fill="#222"/><rect x="0" y="4" width="2" height="1" fill="#222"/><rect x="11" y="4" width="2" height="1" fill="#222"/><rect x="1" y="5" width="1" height="1" fill="#222"/><rect x="11" y="5" width="1" height="1" fill="#222"/><rect x="0" y="6" width="2" height="1" fill="#222"/><rect x="11" y="6" width="2" height="1" fill="#222"/><rect x="1" y="7" width="1" height="1" fill="#222"/><rect x="11" y="7" width="1" height="1" fill="#222"/><rect x="0" y="8" width="2" height="1" fill="#222"/><rect x="11" y="8" width="2" height="1" fill="#222"/><rect x="1" y="9" width="1" height="1" fill="#222"/><rect x="11" y="9" width="1" height="1" fill="#222"/><rect x="0" y="10" width="2" height="1" fill="#222"/><rect x="11" y="10" width="2" height="1" fill="#222"/><rect x="1" y="11" width="11" height="1" fill="#222"/><rect x="2" y="12" width="1" height="1" fill="#222"/><rect x="4" y="12" width="1" height="1" fill="#222"/><rect x="6" y="12" width="1" height="1" fill="#222"/><rect x="8" y="12" width="1" height="1" fill="#222"/><rect x="10" y="12" width="1" height="1" fill="#222"/></g><rect x="2" y="2" width="9" height="9" fill="#f4f6fa" shape-rendering="crispEdges"/><path d="M3.5 6.5l2 2.2 4-4.5" fill="none" stroke="#e02030" stroke-width="1.5"/></svg>
<svg class="a" style="left:5px;top:196px" width="16" height="16" viewBox="0 0 16 16"><path d="M2.5 1.5h8l3 3v11h-11z" fill="url(#gdoc)" stroke="#2a62c8" stroke-width="1.2"/><path d="M4 9l3 3 6-7" fill="none" stroke="#e02030" stroke-width="2"/></svg>
<div class="a" style="left:4px;top:217px;width:19px;height:1px;background:#a0a0a0"></div><div class="a" style="left:4px;top:218px;width:19px;height:1px;background:#fff"></div>
<svg class="a" style="left:5px;top:224px" width="16" height="16" viewBox="0 0 16 16"><rect x="2.5" y="1.5" width="12" height="12" fill="#f4f8ff" stroke="#2a62c8" stroke-width="1"/><rect x="2" y="1" width="13" height="3" fill="#2a62c8"/><path d="M8.5 4v9" stroke="#2a62c8" stroke-width="1"/></svg>
<svg class="a" style="left:6px;top:397px" width="14" height="14" viewBox="0 -2 16 16"><path d="M1.5 -2L15 6 1.5 14z" fill="#1aa01a" stroke="#108010" stroke-width=".6"/></svg>
<div class="a" style="left:4px;top:417px;width:19px;height:1px;background:#a0a0a0"></div><div class="a" style="left:4px;top:418px;width:19px;height:1px;background:#fff"></div>
<svg class="a" style="left:4px;top:424px" width="16" height="16" viewBox="0 0 16 16"><rect x=".5" y=".5" width="6" height="5" fill="#fff" stroke="#2a62c8"/><path d="M2 2.5h3M2 4h3" stroke="#2a62c8" stroke-width=".8"/><g transform="translate(9,2)"><g shape-rendering="crispEdges"><rect x="1" y="0" width="1" height="1" fill="#1a1a1a"/><rect x="3" y="0" width="1" height="1" fill="#1a1a1a"/><rect x="5" y="0" width="1" height="1" fill="#1a1a1a"/><rect x="0" y="1" width="7" height="1" fill="#1a1a1a"/><rect x="1" y="2" width="1" height="1" fill="#1a1a1a"/><rect x="5" y="2" width="1" height="1" fill="#1a1a1a"/><rect x="0" y="3" width="2" height="1" fill="#1a1a1a"/><rect x="5" y="3" width="2" height="1" fill="#1a1a1a"/><rect x="1" y="4" width="1" height="1" fill="#1a1a1a"/><rect x="5" y="4" width="1" height="1" fill="#1a1a1a"/><rect x="0" y="5" width="2" height="1" fill="#1a1a1a"/><rect x="5" y="5" width="2" height="1" fill="#1a1a1a"/><rect x="1" y="6" width="1" height="1" fill="#1a1a1a"/><rect x="5" y="6" width="1" height="1" fill="#1a1a1a"/><rect x="0" y="7" width="2" height="1" fill="#1a1a1a"/><rect x="5" y="7" width="2" height="1" fill="#1a1a1a"/><rect x="1" y="8" width="1" height="1" fill="#1a1a1a"/><rect x="5" y="8" width="1" height="1" fill="#1a1a1a"/><rect x="0" y="9" width="2" height="1" fill="#1a1a1a"/><rect x="5" y="9" width="2" height="1" fill="#1a1a1a"/><rect x="1" y="10" width="1" height="1" fill="#1a1a1a"/><rect x="5" y="10" width="1" height="1" fill="#1a1a1a"/><rect x="0" y="11" width="2" height="1" fill="#1a1a1a"/><rect x="5" y="11" width="2" height="1" fill="#1a1a1a"/><rect x="1" y="12" width="1" height="1" fill="#1a1a1a"/><rect x="5" y="12" width="1" height="1" fill="#1a1a1a"/><rect x="0" y="13" width="7" height="1" fill="#1a1a1a"/></g></g><path d="M3.5 7v6" stroke="#20a020" stroke-width="1.3"/><path d="M1.5 11.5l2 3 2-3z" fill="#20a020"/></svg>
<svg class="a" style="left:4px;top:446px" width="16" height="16" viewBox="0 0 16 16"><rect x=".5" y=".5" width="6" height="5" fill="#fff" stroke="#9a9a9a"/><path d="M2 2.5h3M2 4h3" stroke="#9a9a9a" stroke-width=".8"/><g transform="translate(9,2)"><g shape-rendering="crispEdges"><rect x="1" y="0" width="1" height="1" fill="#a0a0a0"/><rect x="3" y="0" width="1" height="1" fill="#a0a0a0"/><rect x="5" y="0" width="1" height="1" fill="#a0a0a0"/><rect x="0" y="1" width="7" height="1" fill="#a0a0a0"/><rect x="1" y="2" width="1" height="1" fill="#a0a0a0"/><rect x="5" y="2" width="1" height="1" fill="#a0a0a0"/><rect x="0" y="3" width="2" height="1" fill="#a0a0a0"/><rect x="5" y="3" width="2" height="1" fill="#a0a0a0"/><rect x="1" y="4" width="1" height="1" fill="#a0a0a0"/><rect x="5" y="4" width="1" height="1" fill="#a0a0a0"/><rect x="0" y="5" width="2" height="1" fill="#a0a0a0"/><rect x="5" y="5" width="2" height="1" fill="#a0a0a0"/><rect x="1" y="6" width="1" height="1" fill="#a0a0a0"/><rect x="5" y="6" width="1" height="1" fill="#a0a0a0"/><rect x="0" y="7" width="2" height="1" fill="#a0a0a0"/><rect x="5" y="7" width="2" height="1" fill="#a0a0a0"/><rect x="1" y="8" width="1" height="1" fill="#a0a0a0"/><rect x="5" y="8" width="1" height="1" fill="#a0a0a0"/><rect x="0" y="9" width="2" height="1" fill="#a0a0a0"/><rect x="5" y="9" width="2" height="1" fill="#a0a0a0"/><rect x="1" y="10" width="1" height="1" fill="#a0a0a0"/><rect x="5" y="10" width="1" height="1" fill="#a0a0a0"/><rect x="0" y="11" width="2" height="1" fill="#a0a0a0"/><rect x="5" y="11" width="2" height="1" fill="#a0a0a0"/><rect x="1" y="12" width="1" height="1" fill="#a0a0a0"/><rect x="5" y="12" width="1" height="1" fill="#a0a0a0"/><rect x="0" y="13" width="7" height="1" fill="#a0a0a0"/></g></g><path d="M1.5 9.5l4 4M5.5 9.5l-4 4" stroke="#9a9a9a" stroke-width="1.3"/></svg>
<div class="a" style="left:4px;top:467px;width:19px;height:1px;background:#a0a0a0"></div><div class="a" style="left:4px;top:468px;width:19px;height:1px;background:#fff"></div>
<svg class="a" style="left:4px;top:474px" width="16" height="16" viewBox="0 0 16 16"><rect x=".5" y=".5" width="6" height="5" fill="#fff" stroke="#2a62c8"/><path d="M2 2.5h3M2 4h3" stroke="#2a62c8" stroke-width=".8"/><g transform="translate(9,2)"><g shape-rendering="crispEdges"><rect x="1" y="0" width="1" height="1" fill="#1a1a1a"/><rect x="3" y="0" width="1" height="1" fill="#1a1a1a"/><rect x="5" y="0" width="1" height="1" fill="#1a1a1a"/><rect x="0" y="1" width="7" height="1" fill="#1a1a1a"/><rect x="1" y="2" width="1" height="1" fill="#1a1a1a"/><rect x="5" y="2" width="1" height="1" fill="#1a1a1a"/><rect x="0" y="3" width="2" height="1" fill="#1a1a1a"/><rect x="5" y="3" width="2" height="1" fill="#1a1a1a"/><rect x="1" y="4" width="1" height="1" fill="#1a1a1a"/><rect x="5" y="4" width="1" height="1" fill="#1a1a1a"/><rect x="0" y="5" width="2" height="1" fill="#1a1a1a"/><rect x="5" y="5" width="2" height="1" fill="#1a1a1a"/><rect x="1" y="6" width="1" height="1" fill="#1a1a1a"/><rect x="5" y="6" width="1" height="1" fill="#1a1a1a"/><rect x="0" y="7" width="2" height="1" fill="#1a1a1a"/><rect x="5" y="7" width="2" height="1" fill="#1a1a1a"/><rect x="1" y="8" width="1" height="1" fill="#1a1a1a"/><rect x="5" y="8" width="1" height="1" fill="#1a1a1a"/><rect x="0" y="9" width="2" height="1" fill="#1a1a1a"/><rect x="5" y="9" width="2" height="1" fill="#1a1a1a"/><rect x="1" y="10" width="1" height="1" fill="#1a1a1a"/><rect x="5" y="10" width="1" height="1" fill="#1a1a1a"/><rect x="0" y="11" width="2" height="1" fill="#1a1a1a"/><rect x="5" y="11" width="2" height="1" fill="#1a1a1a"/><rect x="1" y="12" width="1" height="1" fill="#1a1a1a"/><rect x="5" y="12" width="1" height="1" fill="#1a1a1a"/><rect x="0" y="13" width="7" height="1" fill="#1a1a1a"/></g></g><path d="M1 11l2 2.5 4-5" fill="none" stroke="#e02030" stroke-width="1.8"/></svg>
<div class="a" style="left:4px;top:495px;width:19px;height:1px;background:#a0a0a0"></div><div class="a" style="left:4px;top:496px;width:19px;height:1px;background:#fff"></div>
<svg class="a" style="left:5px;top:502px" width="16" height="16" viewBox="0 0 16 16"><rect x="2.5" y="1.5" width="12" height="12" fill="#f4f8ff" stroke="#2a62c8" stroke-width="1"/><rect x="2" y="1" width="13" height="3" fill="#2a62c8"/><path d="M8.5 4v9" stroke="#2a62c8" stroke-width="1"/></svg>
<div class="a" style="left:1px;top:41px;width:26px;height:345px;border-top:1px solid #fff;border-left:1px solid #fff;border-right:1px solid #a0a0a0;border-bottom:1px solid #a0a0a0"></div>
<div class="a" style="left:1px;top:391px;width:26px;height:325px;border-top:1px solid #fff;border-left:1px solid #fff;border-right:1px solid #a0a0a0"></div>

<!-- view row -->
<div class="a mono" style="left:31px;top:45px">View:</div>
<div class="a mono" style="left:108px;top:45px">Implementation</div>
<div class="a mono" style="left:237px;top:45px">Simulation</div>

<!-- hierarchy panel -->
<div class="a" style="left:27px;top:61px;width:315px;height:325px;background:#fff;border:1px solid #828790"></div>
<div class="a" style="left:28px;top:62px;width:313px;height:25px;background:linear-gradient(#fff 0 8px,#f1f2f4 8px);border-bottom:1px solid #d8d8d8"></div>
<div class="tr" style="left:32px;top:65px">Hierarchy</div>
<div class="a" style="left:68px;top:124px;width:273px;height:18px;background:#ececec"></div>
<div class="tr" style="left:73px;top:87px">traffic_light</div>
<div class="tr" style="left:73px;top:105px">xc3s50-5pq208</div>
<div class="a" style="left:28px;top:87px;width:313px;height:280px;overflow:hidden">
<div class="tr" style="left:81px;top:36px">traffic_light (D:\A_workarea\ISE_program\traffic_light)</div>
<div class="tr" style="left:85px;top:54px">div100 - div (D:\A_workarea\ISE_program\traffic_light)</div>
<div class="tr" style="left:85px;top:72px">i_green_time_ctrl - green_time_ctrl (D:\A_workarea)</div>
<div class="tr" style="left:85px;top:90px">i_yellow_time_ctrl - yellow_time_ctrl (D:\A_workarea)</div>
<div class="tr" style="left:85px;top:108px">led - led (D:\A_workarea\ISE_program\traffic_light)</div>
<div class="tr" style="left:85px;top:126px">shumaguan_data - shumaguan_data (D:\A_workarea)</div>
<div class="tr" style="left:85px;top:144px">display - display (D:\A_workarea\ISE_program)</div>
</div>
<div class="a" style="left:38px;top:89px;width:1px;height:21px;background:repeating-linear-gradient(#a0a0a0 0 1px,transparent 1px 2px)"></div>
<div class="a" style="left:39px;top:97px;width:9px;height:1px;background:repeating-linear-gradient(90deg,#a0a0a0 0 1px,transparent 1px 2px)"></div>
<svg class="a" style="left:51px;top:88px" width="16" height="16" viewBox="0 0 16 16"><path d="M2.5 3.5L15 1.5V15.5L4.5 14.5z" fill="#f2f7fd" stroke="#1f6ac8" stroke-width="1.3"/><path d="M3.2 4.2L14.4 2.3V5L3.2 7z" fill="#5b9fe6"/><rect x="6.2" y="7.6" width="5.8" height="3.2" rx="1.5" fill="#fff" stroke="#1a2a90" stroke-width="1.2"/></svg>
<svg class="a" style="left:34px;top:110px" width="9" height="9" viewBox="0 0 9 9"><rect x=".5" y=".5" width="8" height="8" rx="1" fill="#fdfdfd" stroke="#8f8f8f"/><path d="M2 4.5h5" stroke="#2c3f8f" stroke-width="1"/></svg>
<div class="a" style="left:44px;top:115px;width:4px;height:1px;background:repeating-linear-gradient(90deg,#a0a0a0 0 1px,transparent 1px 2px)"></div>
<svg class="a" style="left:53px;top:109px" width="13" height="13" viewBox="0 0 13 13"><g shape-rendering="crispEdges"><rect x="3" y="0" width="10" height="1" fill="#1e1e1e"/><rect x="2" y="1" width="1" height="1" fill="#1e1e1e"/><rect x="5" y="1" width="1" height="1" fill="#1e1e1e"/><rect x="7" y="1" width="1" height="1" fill="#1e1e1e"/><rect x="9" y="1" width="1" height="1" fill="#1e1e1e"/><rect x="12" y="1" width="1" height="1" fill="#1e1e1e"/><rect x="1" y="2" width="1" height="1" fill="#1e1e1e"/><rect x="2" y="2" width="1" height="1" fill="#b8d8f0"/><rect x="5" y="2" width="1" height="1" fill="#1e1e1e"/><rect x="7" y="2" width="1" height="1" fill="#1e1e1e"/><rect x="9" y="2" width="1" height="1" fill="#1e1e1e"/><rect x="11" y="2" width="2" height="1" fill="#1e1e1e"/><rect x="0" y="3" width="1" height="1" fill="#1e1e1e"/><rect x="3" y="3" width="1" height="1" fill="#b8d8f0"/><rect x="9" y="3" width="4" height="1" fill="#1e1e1e"/><rect x="0" y="4" width="4" height="1" fill="#1e1e1e"/><rect x="9" y="4" width="1" height="1" fill="#1e1e1e"/><rect x="12" y="4" width="1" height="1" fill="#1e1e1e"/><rect x="0" y="5" width="1" height="1" fill="#1e1e1e"/><rect x="4" y="5" width="5" height="1" fill="#eef4fb"/><rect x="9" y="5" width="4" height="1" fill="#1e1e1e"/><rect x="0" y="6" width="4" height="1" fill="#1e1e1e"/><rect x="4" y="6" width="5" height="1" fill="#eef4fb"/><rect x="12" y="6" width="1" height="1" fill="#1e1e1e"/><rect x="0" y="7" width="1" height="1" fill="#1e1e1e"/><rect x="4" y="7" width="5" height="1" fill="#eef4fb"/><rect x="9" y="7" width="4" height="1" fill="#1e1e1e"/><rect x="0" y="8" width="4" height="1" fill="#1e1e1e"/><rect x="4" y="8" width="5" height="1" fill="#eef4fb"/><rect x="12" y="8" width="1" height="1" fill="#1e1e1e"/><rect x="0" y="9" width="1" height="1" fill="#1e1e1e"/><rect x="3" y="9" width="1" height="1" fill="#1e1e1e"/><rect x="5" y="9" width="1" height="1" fill="#1e1e1e"/><rect x="7" y="9" width="1" height="1" fill="#1e1e1e"/><rect x="9" y="9" width="2" height="1" fill="#a8d4f8"/><rect x="12" y="9" width="1" height="1" fill="#1e1e1e"/><rect x="0" y="10" width="1" height="1" fill="#1e1e1e"/><rect x="3" y="10" width="1" height="1" fill="#1e1e1e"/><rect x="5" y="10" width="1" height="1" fill="#1e1e1e"/><rect x="7" y="10" width="1" height="1" fill="#1e1e1e"/><rect x="9" y="10" width="2" height="1" fill="#a8d4f8"/><rect x="12" y="10" width="1" height="1" fill="#1e1e1e"/><rect x="0" y="11" width="1" height="1" fill="#1e1e1e"/><rect x="3" y="11" width="1" height="1" fill="#1e1e1e"/><rect x="5" y="11" width="1" height="1" fill="#1e1e1e"/><rect x="7" y="11" width="1" height="1" fill="#1e1e1e"/><rect x="9" y="11" width="1" height="1" fill="#1e1e1e"/><rect x="12" y="11" width="1" height="1" fill="#1e1e1e"/><rect x="0" y="12" width="13" height="1" fill="#1e1e1e"/></g></svg>
<div class="a" style="left:58px;top:121px;width:1px;height:7px;background:repeating-linear-gradient(#a0a0a0 0 1px,transparent 1px 2px)"></div>
<svg class="a" style="left:54px;top:128px" width="9" height="9" viewBox="0 0 9 9"><rect x=".5" y=".5" width="8" height="8" rx="1" fill="#fdfdfd" stroke="#8f8f8f"/><path d="M2 4.5h5" stroke="#2c3f8f" stroke-width="1"/></svg>
<div class="a" style="left:64px;top:133px;width:4px;height:1px;background:repeating-linear-gradient(90deg,#a0a0a0 0 1px,transparent 1px 2px)"></div>
<svg class="a" style="left:71px;top:125px" width="16" height="16" viewBox="0 0 16 16"><path d="M1.5 1.5h9l4 4v9.5h-13z" fill="url(#gsel)" stroke="#1d6ed8" stroke-width="1.6"/><path d="M10.5 1.5v4h4" fill="#b0c8ee" stroke="#5b7fc8" stroke-width=".8"/><path d="M5.5 5l2.5 7.5L10.5 5" fill="none" stroke="#0c2860" stroke-width="1"/></svg>
<svg class="a" style="left:87px;top:125px" width="16" height="16" viewBox="0 0 16 16"><g transform="translate(5,0)"><g shape-rendering="crispEdges"><rect x="1" y="0" width="1" height="1" fill="#1c9a3a"/><rect x="3" y="0" width="1" height="1" fill="#1c9a3a"/><rect x="5" y="0" width="1" height="1" fill="#1c9a3a"/><rect x="0" y="1" width="7" height="1" fill="#1c9a3a"/><rect x="1" y="2" width="1" height="1" fill="#1c9a3a"/><rect x="2" y="2" width="3" height="1" fill="#9fd8a9"/><rect x="5" y="2" width="1" height="1" fill="#1c9a3a"/><rect x="0" y="3" width="2" height="1" fill="#1c9a3a"/><rect x="2" y="3" width="3" height="1" fill="#9fd8a9"/><rect x="5" y="3" width="2" height="1" fill="#1c9a3a"/><rect x="1" y="4" width="1" height="1" fill="#1c9a3a"/><rect x="2" y="4" width="3" height="1" fill="#9fd8a9"/><rect x="5" y="4" width="1" height="1" fill="#1c9a3a"/><rect x="0" y="5" width="7" height="1" fill="#1c9a3a"/><rect x="1" y="6" width="1" height="1" fill="#1c9a3a"/><rect x="3" y="6" width="1" height="1" fill="#1c9a3a"/><rect x="5" y="6" width="1" height="1" fill="#1c9a3a"/></g></g><g transform="translate(0,8)"><g shape-rendering="crispEdges"><rect x="1" y="0" width="1" height="1" fill="#4a6ac8"/><rect x="3" y="0" width="1" height="1" fill="#4a6ac8"/><rect x="5" y="0" width="1" height="1" fill="#4a6ac8"/><rect x="0" y="1" width="7" height="1" fill="#4a6ac8"/><rect x="1" y="2" width="1" height="1" fill="#4a6ac8"/><rect x="2" y="2" width="3" height="1" fill="#b5c5ef"/><rect x="5" y="2" width="1" height="1" fill="#4a6ac8"/><rect x="0" y="3" width="2" height="1" fill="#4a6ac8"/><rect x="2" y="3" width="3" height="1" fill="#b5c5ef"/><rect x="5" y="3" width="2" height="1" fill="#4a6ac8"/><rect x="1" y="4" width="1" height="1" fill="#4a6ac8"/><rect x="2" y="4" width="3" height="1" fill="#b5c5ef"/><rect x="5" y="4" width="1" height="1" fill="#4a6ac8"/><rect x="0" y="5" width="7" height="1" fill="#4a6ac8"/><rect x="1" y="6" width="1" height="1" fill="#4a6ac8"/><rect x="3" y="6" width="1" height="1" fill="#4a6ac8"/><rect x="5" y="6" width="1" height="1" fill="#4a6ac8"/></g></g><g transform="translate(9,8)"><g shape-rendering="crispEdges"><rect x="1" y="0" width="1" height="1" fill="#4a6ac8"/><rect x="3" y="0" width="1" height="1" fill="#4a6ac8"/><rect x="5" y="0" width="1" height="1" fill="#4a6ac8"/><rect x="0" y="1" width="7" height="1" fill="#4a6ac8"/><rect x="1" y="2" width="1" height="1" fill="#4a6ac8"/><rect x="2" y="2" width="3" height="1" fill="#b5c5ef"/><rect x="5" y="2" width="1" height="1" fill="#4a6ac8"/><rect x="0" y="3" width="2" height="1" fill="#4a6ac8"/><rect x="2" y="3" width="3" height="1" fill="#b5c5ef"/><rect x="5" y="3" width="2" height="1" fill="#4a6ac8"/><rect x="1" y="4" width="1" height="1" fill="#4a6ac8"/><rect x="2" y="4" width="3" height="1" fill="#b5c5ef"/><rect x="5" y="4" width="1" height="1" fill="#4a6ac8"/><rect x="0" y="5" width="7" height="1" fill="#4a6ac8"/><rect x="1" y="6" width="1" height="1" fill="#4a6ac8"/><rect x="3" y="6" width="1" height="1" fill="#4a6ac8"/><rect x="5" y="6" width="1" height="1" fill="#4a6ac8"/></g></g></svg>
<div class="a" style="left:78px;top:143px;width:1px;height:97px;background:repeating-linear-gradient(#a0a0a0 0 1px,transparent 1px 2px)"></div>
<div class="a" style="left:79px;top:151px;width:9px;height:1px;background:repeating-linear-gradient(90deg,#a0a0a0 0 1px,transparent 1px 2px)"></div>
<svg class="a" style="left:91px;top:142px" width="16" height="16" viewBox="0 0 16 16"><path d="M1.5 1.5h9l4 4v9.5h-13z" fill="url(#gdoc)" stroke="#1d6ed8" stroke-width="1.6"/><path d="M10.5 1.5v4h4" fill="#c8dcf5" stroke="#5b7fc8" stroke-width=".8"/><path d="M5.5 5l2.5 7.5L10.5 5" fill="none" stroke="#0c2860" stroke-width="1"/></svg>
<svg class="a" style="left:74px;top:164px" width="9" height="9" viewBox="0 0 9 9"><rect x=".5" y=".5" width="8" height="8" rx="1" fill="#fdfdfd" stroke="#8f8f8f"/><path d="M2 4.5h5" stroke="#2c3f8f" stroke-width="1"/><path d="M4.5 2v5" stroke="#2c3f8f" stroke-width="1"/></svg>
<div class="a" style="left:84px;top:169px;width:4px;height:1px;background:repeating-linear-gradient(90deg,#a0a0a0 0 1px,transparent 1px 2px)"></div>
<svg class="a" style="left:91px;top:160px" width="16" height="16" viewBox="0 0 16 16"><path d="M1.5 1.5h9l4 4v9.5h-13z" fill="url(#gdoc)" stroke="#1d6ed8" stroke-width="1.6"/><path d="M10.5 1.5v4h4" fill="#c8dcf5" stroke="#5b7fc8" stroke-width=".8"/><path d="M5.5 5l2.5 7.5L10.5 5" fill="none" stroke="#0c2860" stroke-width="1"/></svg>
<svg class="a" style="left:74px;top:182px" width="9" height="9" viewBox="0 0 9 9"><rect x=".5" y=".5" width="8" height="8" rx="1" fill="#fdfdfd" stroke="#8f8f8f"/><path d="M2 4.5h5" stroke="#2c3f8f" stroke-width="1"/><path d="M4.5 2v5" stroke="#2c3f8f" stroke-width="1"/></svg>
<div class="a" style="left:84px;top:187px;width:4px;height:1px;background:repeating-linear-gradient(90deg,#a0a0a0 0 1px,transparent 1px 2px)"></div>
<svg class="a" style="left:91px;top:178px" width="16" height="16" viewBox="0 0 16 16"><path d="M1.5 1.5h9l4 4v9.5h-13z" fill="url(#gdoc)" stroke="#1d6ed8" stroke-width="1.6"/><path d="M10.5 1.5v4h4" fill="#c8dcf5" stroke="#5b7fc8" stroke-width=".8"/><path d="M5.5 5l2.5 7.5L10.5 5" fill="none" stroke="#0c2860" stroke-width="1"/></svg>
<div class="a" style="left:79px;top:205px;width:9px;height:1px;background:repeating-linear-gradient(90deg,#a0a0a0 0 1px,transparent 1px 2px)"></div>
<svg class="a" style="left:91px;top:196px" width="16" height="16" viewBox="0 0 16 16"><path d="M1.5 1.5h9l4 4v9.5h-13z" fill="url(#gdoc)" stroke="#1d6ed8" stroke-width="1.6"/><path d="M10.5 1.5v4h4" fill="#c8dcf5" stroke="#5b7fc8" stroke-width=".8"/><path d="M5.5 5l2.5 7.5L10.5 5" fill="none" stroke="#0c2860" stroke-width="1"/></svg>
<div class="a" style="left:79px;top:223px;width:9px;height:1px;background:repeating-linear-gradient(90deg,#a0a0a0 0 1px,transparent 1px 2px)"></div>
<svg class="a" style="left:91px;top:214px" width="16" height="16" viewBox="0 0 16 16"><path d="M1.5 1.5h9l4 4v9.5h-13z" fill="url(#gdoc)" stroke="#1d6ed8" stroke-width="1.6"/><path d="M10.5 1.5v4h4" fill="#c8dcf5" stroke="#5b7fc8" stroke-width=".8"/><path d="M5.5 5l2.5 7.5L10.5 5" fill="none" stroke="#0c2860" stroke-width="1"/></svg>
<svg class="a" style="left:74px;top:236px" width="9" height="9" viewBox="0 0 9 9"><rect x=".5" y=".5" width="8" height="8" rx="1" fill="#fdfdfd" stroke="#8f8f8f"/><path d="M2 4.5h5" stroke="#2c3f8f" stroke-width="1"/><path d="M4.5 2v5" stroke="#2c3f8f" stroke-width="1"/></svg>
<div class="a" style="left:84px;top:241px;width:4px;height:1px;background:repeating-linear-gradient(90deg,#a0a0a0 0 1px,transparent 1px 2px)"></div>
<svg class="a" style="left:91px;top:232px" width="16" height="16" viewBox="0 0 16 16"><path d="M1.5 1.5h9l4 4v9.5h-13z" fill="url(#gdoc)" stroke="#1d6ed8" stroke-width="1.6"/><path d="M10.5 1.5v4h4" fill="#c8dcf5" stroke="#5b7fc8" stroke-width=".8"/><path d="M5.5 5l2.5 7.5L10.5 5" fill="none" stroke="#0c2860" stroke-width="1"/></svg>
<!-- hscroll -->
<div class="a" style="left:28px;top:368px;width:313px;height:17px;background:#f0f0f0"></div>
<div class="a" style="left:46px;top:369px;width:116px;height:15px;border:1px solid #9b9b9b;border-radius:2px;background:linear-gradient(#f6f6f6,#dcdcdc)"></div>

<!-- splitter -->

<!-- no processes row -->
<div class="a mono" style="left:58px;top:400px">No Processes Running</div>

<!-- processes panel -->
<div class="a" style="left:27px;top:420px;width:315px;height:296px;background:#fff;border:1px solid #828790"></div>
<div class="a" style="left:28px;top:421px;width:313px;height:25px;background:linear-gradient(#fff 0 8px,#f1f2f4 8px);border-bottom:1px solid #d8d8d8"></div>
<div class="tr" style="left:32px;top:424px">Processes: traffic_light</div>
<div class="a" style="left:48px;top:500px;width:293px;height:18px;background:#ececec"></div>
<div class="a" style="left:28px;top:421px;width:313px;height:294px;overflow:hidden">
<div class="tr" style="left:61px;top:25px">Design Summary/Reports</div>
<div class="tr" style="left:61px;top:43px">Design Utilities</div>
<div class="tr" style="left:61px;top:61px">User Constraints</div>
<div class="tr" style="left:61px;top:79px">Synthesize - XST</div>
<div class="tr" style="left:81px;top:97px">View RTL Schematic</div>
<div class="tr" style="left:81px;top:115px">View Technology Schematic</div>
<div class="tr" style="left:81px;top:133px">Check Syntax</div>
<div class="tr" style="left:81px;top:151px;letter-spacing:-.15px">Generate Post-Synthesis Simulation M...</div>
<div class="tr" style="left:61px;top:169px">Implement Design</div>
<div class="tr" style="left:61px;top:187px">Generate Programming File</div>
<div class="tr" style="left:61px;top:205px">Configure Target Device</div>
<div class="tr" style="left:61px;top:223px">Analyze Design Using ChipScope</div>

</div>
<div class="a" style="left:38px;top:447px;width:1px;height:208px;background:repeating-linear-gradient(#a0a0a0 0 1px,transparent 1px 2px)"></div>
<div class="a" style="left:39px;top:456px;width:9px;height:1px;background:repeating-linear-gradient(90deg,#a0a0a0 0 1px,transparent 1px 2px)"></div>
<svg class="a" style="left:34px;top:469px" width="9" height="9" viewBox="0 0 9 9"><rect x=".5" y=".5" width="8" height="8" rx="1" fill="#fdfdfd" stroke="#8f8f8f"/><path d="M2 4.5h5" stroke="#2c3f8f" stroke-width="1"/><path d="M4.5 2v5" stroke="#2c3f8f" stroke-width="1"/></svg>
<div class="a" style="left:44px;top:474px;width:4px;height:1px;background:repeating-linear-gradient(90deg,#a0a0a0 0 1px,transparent 1px 2px)"></div>
<svg class="a" style="left:34px;top:487px" width="9" height="9" viewBox="0 0 9 9"><rect x=".5" y=".5" width="8" height="8" rx="1" fill="#fdfdfd" stroke="#8f8f8f"/><path d="M2 4.5h5" stroke="#2c3f8f" stroke-width="1"/><path d="M4.5 2v5" stroke="#2c3f8f" stroke-width="1"/></svg>
<div class="a" style="left:44px;top:492px;width:4px;height:1px;background:repeating-linear-gradient(90deg,#a0a0a0 0 1px,transparent 1px 2px)"></div>
<svg class="a" style="left:34px;top:505px" width="9" height="9" viewBox="0 0 9 9"><rect x=".5" y=".5" width="8" height="8" rx="1" fill="#fdfdfd" stroke="#8f8f8f"/><path d="M2 4.5h5" stroke="#2c3f8f" stroke-width="1"/></svg>
<div class="a" style="left:44px;top:510px;width:4px;height:1px;background:repeating-linear-gradient(90deg,#a0a0a0 0 1px,transparent 1px 2px)"></div>
<svg class="a" style="left:34px;top:595px" width="9" height="9" viewBox="0 0 9 9"><rect x=".5" y=".5" width="8" height="8" rx="1" fill="#fdfdfd" stroke="#8f8f8f"/><path d="M2 4.5h5" stroke="#2c3f8f" stroke-width="1"/><path d="M4.5 2v5" stroke="#2c3f8f" stroke-width="1"/></svg>
<div class="a" style="left:44px;top:600px;width:4px;height:1px;background:repeating-linear-gradient(90deg,#a0a0a0 0 1px,transparent 1px 2px)"></div>
<div class="a" style="left:39px;top:618px;width:9px;height:1px;background:repeating-linear-gradient(90deg,#a0a0a0 0 1px,transparent 1px 2px)"></div>
<svg class="a" style="left:34px;top:631px" width="9" height="9" viewBox="0 0 9 9"><rect x=".5" y=".5" width="8" height="8" rx="1" fill="#fdfdfd" stroke="#8f8f8f"/><path d="M2 4.5h5" stroke="#2c3f8f" stroke-width="1"/><path d="M4.5 2v5" stroke="#2c3f8f" stroke-width="1"/></svg>
<div class="a" style="left:44px;top:636px;width:4px;height:1px;background:repeating-linear-gradient(90deg,#a0a0a0 0 1px,transparent 1px 2px)"></div>
<div class="a" style="left:39px;top:654px;width:9px;height:1px;background:repeating-linear-gradient(90deg,#a0a0a0 0 1px,transparent 1px 2px)"></div>
<svg class="a" style="left:52px;top:450px" width="14" height="14" viewBox="0 0 16 16"><path d="M2.5 2h10.5v3h-1l-.8-1.6H6l3.6 4.6L5.8 12.4h5.4l.9-1.6h1V14H2.5v-.8L7 8 2.5 2.8z" fill="#9fe0b0" stroke="#1f9e4f" stroke-width=".9"/></svg>
<svg class="a" style="left:51px;top:466px" width="16" height="16" viewBox="0 0 16 16"><path d="M8 9.5L15.5 6v5.5L8 15.5z" fill="#e2501e" stroke="#b83410" stroke-width=".7"/><path d="M9 11.5l6-3M9 13.5l6-3" stroke="#f7a060" stroke-width=".8" stroke-dasharray="1 1"/><path d="M1 15.5V10.5Q4 7.5 8 9.5v6z" fill="url(#gbox)" stroke="#b83410" stroke-width=".7"/><path d="M4 4.5l6.5 6" stroke="#4a4a4a" stroke-width="2.2"/><path d="M1 4.5L4.5 1l4 1.5-4 4z" fill="#5a5a5a" stroke="#333" stroke-width=".5"/><path d="M9.5 11.5L14 6" stroke="#b8c0c8" stroke-width="2"/><path d="M12 4.5l1-3h1v2l1.5-1 .5 1-1.5 3h-2z" fill="#8a8a8a" stroke="#444" stroke-width=".6"/></svg>
<svg class="a" style="left:51px;top:484px" width="16" height="16" viewBox="0 0 16 16"><path d="M8 9.5L15.5 6v5.5L8 15.5z" fill="#e2501e" stroke="#b83410" stroke-width=".7"/><path d="M9 11.5l6-3M9 13.5l6-3" stroke="#f7a060" stroke-width=".8" stroke-dasharray="1 1"/><path d="M1 15.5V10.5Q4 7.5 8 9.5v6z" fill="url(#gbox)" stroke="#b83410" stroke-width=".7"/><path d="M4 4.5l6.5 6" stroke="#4a4a4a" stroke-width="2.2"/><path d="M1 4.5L4.5 1l4 1.5-4 4z" fill="#5a5a5a" stroke="#333" stroke-width=".5"/><path d="M9.5 11.5L14 6" stroke="#b8c0c8" stroke-width="2"/><path d="M12 4.5l1-3h1v2l1.5-1 .5 1-1.5 3h-2z" fill="#8a8a8a" stroke="#444" stroke-width=".6"/></svg>
<svg class="a" style="left:51px;top:503px" width="16" height="16" viewBox="0 0 16 16"><g fill="#1a74cc"><path d="M7.2 13.6A6.2 6.2 0 0 1 3.6 4.2" fill="none" stroke="#1a74cc" stroke-width="2.4"/><path d="M1.2 1.2H7.6V7.4z"/><path d="M9.8 1.4A6.2 6.2 0 0 1 13.4 10.8" fill="none" stroke="#1a74cc" stroke-width="2.4"/><path d="M15.8 13.8H9.4V7.6z"/></g></svg>
<div class="a" style="left:58px;top:519px;width:1px;height:64px;background:repeating-linear-gradient(#a0a0a0 0 1px,transparent 1px 2px)"></div>
<div class="a" style="left:59px;top:528px;width:9px;height:1px;background:repeating-linear-gradient(90deg,#a0a0a0 0 1px,transparent 1px 2px)"></div>
<div class="a" style="left:59px;top:546px;width:9px;height:1px;background:repeating-linear-gradient(90deg,#a0a0a0 0 1px,transparent 1px 2px)"></div>
<div class="a" style="left:59px;top:564px;width:9px;height:1px;background:repeating-linear-gradient(90deg,#a0a0a0 0 1px,transparent 1px 2px)"></div>
<div class="a" style="left:59px;top:582px;width:9px;height:1px;background:repeating-linear-gradient(90deg,#a0a0a0 0 1px,transparent 1px 2px)"></div>
<svg class="a" style="left:71px;top:519px" width="16" height="16" viewBox="0 0 16 16"><path d="M1.5 1.5h9l3 3v10h-12z" fill="#f4f8ff" stroke="#1f3d9e" stroke-width="1.4"/><path d="M10.5 1.5v3h3" fill="#c8d8f5" stroke="#4a66b8" stroke-width=".7"/><path d="M3.5 4.5h8l-4 5z" fill="#e8b820"/><path d="M3 10.5h3M3 12.5h3" stroke="#2a4aa8" stroke-width="1"/><circle cx="9" cy="11" r="2.2" fill="#d8e8f8" stroke="#7aa0d8" stroke-width=".7"/></svg>
<svg class="a" style="left:71px;top:537px" width="16" height="16" viewBox="0 0 16 16"><path d="M1.5 1.5h9l3 3v10h-12z" fill="#f4f8ff" stroke="#1f3d9e" stroke-width="1.4"/><path d="M10.5 1.5v3h3" fill="#c8d8f5" stroke="#4a66b8" stroke-width=".7"/><path d="M3.5 4.5h8l-4 5z" fill="#2a3fa8"/><path d="M3 10.5h3M3 12.5h3" stroke="#2a4aa8" stroke-width="1"/><circle cx="9" cy="11" r="2.2" fill="#d8e8f8" stroke="#7aa0d8" stroke-width=".7"/></svg>
<svg class="a" style="left:71px;top:557px" width="16" height="16" viewBox="0 0 16 16"><g fill="#1a74cc"><path d="M7.2 13.6A6.2 6.2 0 0 1 3.6 4.2" fill="none" stroke="#1a74cc" stroke-width="2.4"/><path d="M1.2 1.2H7.6V7.4z"/><path d="M9.8 1.4A6.2 6.2 0 0 1 13.4 10.8" fill="none" stroke="#1a74cc" stroke-width="2.4"/><path d="M15.8 13.8H9.4V7.6z"/></g></svg>
<svg class="a" style="left:71px;top:575px" width="16" height="16" viewBox="0 0 16 16"><g fill="#1a74cc"><path d="M7.2 13.6A6.2 6.2 0 0 1 3.6 4.2" fill="none" stroke="#1a74cc" stroke-width="2.4"/><path d="M1.2 1.2H7.6V7.4z"/><path d="M9.8 1.4A6.2 6.2 0 0 1 13.4 10.8" fill="none" stroke="#1a74cc" stroke-width="2.4"/><path d="M15.8 13.8H9.4V7.6z"/></g></svg>
<svg class="a" style="left:51px;top:593px" width="16" height="16" viewBox="0 0 16 16"><g fill="#1a74cc"><path d="M7.2 13.6A6.2 6.2 0 0 1 3.6 4.2" fill="none" stroke="#1a74cc" stroke-width="2.4"/><path d="M1.2 1.2H7.6V7.4z"/><path d="M9.8 1.4A6.2 6.2 0 0 1 13.4 10.8" fill="none" stroke="#1a74cc" stroke-width="2.4"/><path d="M15.8 13.8H9.4V7.6z"/></g></svg>
<svg class="a" style="left:51px;top:611px" width="16" height="16" viewBox="0 0 16 16"><g fill="#1a74cc"><path d="M7.2 13.6A6.2 6.2 0 0 1 3.6 4.2" fill="none" stroke="#1a74cc" stroke-width="2.4"/><path d="M1.2 1.2H7.6V7.4z"/><path d="M9.8 1.4A6.2 6.2 0 0 1 13.4 10.8" fill="none" stroke="#1a74cc" stroke-width="2.4"/><path d="M15.8 13.8H9.4V7.6z"/></g></svg>
<svg class="a" style="left:51px;top:628px" width="16" height="16" viewBox="0 0 16 16"><rect x="2" y="1.5" width="9" height="8" rx="1" fill="#c8cdf0" stroke="#7a7fb8" stroke-width="1"/><rect x="3.5" y="3" width="6" height="5" fill="#e8ecff"/><path d="M2.5 11h7l1 3h-9z" fill="#d8d8ec" stroke="#8a8ab8" stroke-width=".8"/><path d="M6 14l8-6 2 2.5-8 6z" fill="#2a9a3a" stroke="#1a6a22" stroke-width=".7"/><circle cx="9.5" cy="12" r=".9" fill="#e050c0"/><circle cx="12" cy="10.5" r=".9" fill="#60c0ff"/><path d="M11 1.5h3v6" fill="none" stroke="#c03070" stroke-width=".8"/></svg>
<svg class="a" style="left:51px;top:646px" width="16" height="16" viewBox="0 0 16 16"><circle cx="5.5" cy="8" r="3.8" fill="#f07a3a" stroke="#2a2a2a" stroke-width="1.6"/><circle cx="5.5" cy="8" r="2" fill="#ff9a5a"/><path d="M9.5 8.5h6.5" stroke="#2a2a2a" stroke-width="1.6"/><path d="M11.5 8V5M14 8V5" stroke="#2a2a2a" stroke-width="1.4"/></svg>
<!-- ===== middle vertical toolbar ===== -->
<svg class="a" style="left:352px;top:24px" width="16" height="16" viewBox="0 0 16 16"><path d="M2 1.5h12M8 5h6M8 7.5h6M8 10h6M2 13.5h12" stroke="#8a8a8a" stroke-width="1.2"/><path d="M7 3.5l-5 4 5 4z" fill="#2a62c8"/></svg>
<svg class="a" style="left:352px;top:46px" width="16" height="16" viewBox="0 0 16 16"><path d="M2 1.5h12M8 5h6M8 7.5h6M8 10h6M2 13.5h12" stroke="#8a8a8a" stroke-width="1.2"/><path d="M2 3.5l5 4-5 4z" fill="#2a62c8"/></svg>
<div class="a" style="left:350px;top:66px;width:19px;height:1px;background:#a0a0a0"></div><div class="a" style="left:350px;top:67px;width:19px;height:1px;background:#fff"></div>
<svg class="a" style="left:352px;top:73px" width="16" height="16" viewBox="0 0 16 16"><path d="M2 1.5h10M4 4h8M4 11h8M2 13.5h10" stroke="#9a9a9a" stroke-width="1.2"/><path d="M4 6.5h8M4 8.5h8" stroke="#90e860" stroke-width="1.5"/></svg>
<svg class="a" style="left:352px;top:95px" width="16" height="16" viewBox="0 0 16 16"><path d="M2.5 3.5h3.5a2.2 2.2 0 0 1 0 4.4h-2" fill="none" stroke="#1a3ab8" stroke-width="1.5"/><path d="M0.5 3.5l3-2.5v5z" fill="#1a3ab8"/><path d="M5 9.5h7" stroke="#90e860" stroke-width="1.6"/><path d="M5 12h7M3 14.5h9" stroke="#9a9a9a" stroke-width="1.2"/></svg>
<svg class="a" style="left:352px;top:117px" width="16" height="16" viewBox="0 0 16 16"><path d="M2 1.5h10M4 4h8M4 11h8M2 13.5h10" stroke="#c4c4c4" stroke-width="1.2"/><path d="M4 6.5h8M4 8.5h8" stroke="#c4c4c4" stroke-width="1.5"/></svg>
<svg class="a" style="left:352px;top:139px" width="16" height="16" viewBox="0 0 16 16"><path d="M2.5 3.5h3.5a2.2 2.2 0 0 1 0 4.4h-2" fill="none" stroke="#909090" stroke-width="1.5"/><path d="M0.5 3.5l3-2.5v5z" fill="#909090"/><path d="M5 9.5h7" stroke="#c4c4c4" stroke-width="1.6"/><path d="M5 12h7M3 14.5h9" stroke="#c4c4c4" stroke-width="1.2"/></svg>
<div class="a" style="left:350px;top:160px;width:19px;height:1px;background:#a0a0a0"></div><div class="a" style="left:350px;top:161px;width:19px;height:1px;background:#fff"></div>
<svg class="a" style="left:352px;top:166px" width="16" height="16" viewBox="0 0 16 16"><path d="M1 12L9 3" stroke="#222" stroke-width="1.2"/><path d="M6 6l4-4 5 3-3 3.5 2 3-5-1z" fill="#1a6ad8" stroke="#0a4aa8" stroke-width=".6"/></svg>
<svg class="a" style="left:352px;top:189px" width="16" height="16" viewBox="0 0 16 16"><path d="M2 14L10 5" stroke="#555" stroke-width="1.2"/><path d="M7 8l3.5-3 4.5 3-2.5 3 2 3-4.5-1z" fill="#a8a8a8" stroke="#808080" stroke-width=".6"/><path d="M3 4a2 2 0 1 1 2.5 1.5v1.5" fill="none" stroke="#888" stroke-width="1"/></svg>
<svg class="a" style="left:352px;top:211px" width="16" height="16" viewBox="0 0 16 16"><path d="M2 14L10 5" stroke="#555" stroke-width="1.2"/><path d="M7 8l3.5-3 4.5 3-2.5 3 2 3-4.5-1z" fill="#a8a8a8" stroke="#808080" stroke-width=".6"/><path d="M2.5 4.5a2.5 2 0 1 1 3 2" fill="none" stroke="#888" stroke-width="1.2"/><path d="M1 3l2 2.5 1.5-2.5z" fill="#888"/></svg>
<svg class="a" style="left:352px;top:233px" width="16" height="16" viewBox="0 0 16 16"><path d="M2 14L10 5" stroke="#555" stroke-width="1.2"/><path d="M7 8l3.5-3 4.5 3-2.5 3 2 3-4.5-1z" fill="#a8a8a8" stroke="#808080" stroke-width=".6"/><path d="M1.5 1.5l4 4M5.5 1.5l-4 4" stroke="#888" stroke-width="1.1"/></svg>
<div class="a" style="left:350px;top:254px;width:19px;height:1px;background:#a0a0a0"></div><div class="a" style="left:350px;top:255px;width:19px;height:1px;background:#fff"></div>
<svg class="a" style="left:352px;top:261px" width="16" height="16" viewBox="0 0 16 16"><circle cx="8" cy="8" r="7" fill="#c8c8c8" stroke="#a8a8a8" stroke-width="1"/><path d="M12 8H5M8 4.5L4.5 8 8 11.5" fill="none" stroke="#fff" stroke-width="1.6"/></svg>
<svg class="a" style="left:352px;top:283px" width="16" height="16" viewBox="0 0 16 16"><circle cx="8" cy="8" r="7" fill="#c8c8c8" stroke="#a8a8a8" stroke-width="1"/><path d="M4 8h7M8 4.5l3.5 3.5-3.5 3.5" fill="none" stroke="#fff" stroke-width="1.6"/></svg>
<div class="a" style="left:350px;top:304px;width:19px;height:1px;background:#a0a0a0"></div><div class="a" style="left:350px;top:305px;width:19px;height:1px;background:#fff"></div>
<div class="a" style="left:346px;top:18px;width:1px;height:697px;background:#fff"></div>

<!-- ===== editor ===== -->
<div class="a" style="left:372px;top:18px;width:1px;height:698px;background:#9a9a9a"></div>
<div id="ed"></div>
<div id="gut"></div>
<div class="ln" style="top:24px"><b>1</b><p><span class="c"><i>/*</i></span></p></div>
<div class="ln" style="top:40px"><b>2</b><p><span class="c"><svg class="cj"><use href="#g0"/></svg><i>-&gt;</i><svg class="cj"><use href="#g1"/></svg><i> </i><svg class="cj"><use href="#g1"/></svg><i>-&gt;</i><svg class="cj"><use href="#g2"/></svg><i> </i><svg class="cj"><use href="#g2"/></svg><i>-&gt;</i><svg class="cj"><use href="#g0"/></svg></span></p></div>
<div class="ln" style="top:56px"><b>3</b><p></p></div>
<div class="ln" style="top:72px"><b>4</b><p><span class="c"><i>1</i><svg class="cj"><use href="#g3"/></svg><svg class="cj"><use href="#g0"/></svg><i>--</i><svg class="cj"><use href="#g4"/></svg><svg class="cj"><use href="#g5"/></svg><i>main_red_times------------------------</i><svg class="cj"><use href="#g1"/></svg><i>--</i><svg class="cj"><use href="#g4"/></svg><svg class="cj"><use href="#g5"/></svg><i>main_green_times---main_yellow_times</i><svg class="cj"><use href="#g2"/></svg><svg class="cj"><use href="#g6"/></svg></span></p></div>
<div class="ln" style="top:88px"><b>5</b><p></p></div>
<div class="ln" style="top:104px"><b>6</b><p><span class="c"><i>2</i><svg class="cj"><use href="#g3"/></svg><svg class="cj"><use href="#g1"/></svg><i>--</i><svg class="cj"><use href="#g4"/></svg><svg class="cj"><use href="#g5"/></svg><i>branch_green_times---branch_yellow_times</i><svg class="cj"><use href="#g2"/></svg><svg class="cj"><use href="#g6"/></svg><i>--------------------</i><svg class="cj"><use href="#g0"/></svg><i>--</i><svg class="cj"><use href="#g4"/></svg><svg class="cj"><use href="#g5"/></svg><i>branch_reg_times</i></span></p></div>
<div class="ln" style="top:120px"><b>7</b><p></p></div>
<div class="ln" style="top:136px"><b>8</b><p><span class="c"><i>*/</i></span></p></div>
<div class="ln" style="top:152px"><b>9</b><p><span class="c"><i>//</i><svg class="cj"><use href="#g7"/></svg><svg class="cj"><use href="#g8"/></svg><svg class="cj"><use href="#g9"/></svg><svg class="cj"><use href="#g10"/></svg><svg class="cj"><use href="#g11"/></svg></span></p></div>
<div class="ln" style="top:168px"><b>10</b><p><span class="c"><i>//</i><svg class="cj"><use href="#g12"/></svg><svg class="cj"><use href="#g13"/></svg><svg class="cj"><use href="#g9"/></svg><svg class="cj"><use href="#g14"/></svg><svg class="cj"><use href="#g11"/></svg></span></p></div>
<div class="ln" style="top:184px"><b>11</b><p><span class="k"><i>module</i></span><span class="t"><i> traffic_light(</i></span></p></div>
<div class="ln" style="top:200px"><b>12</b><p><span class="k"><i>input</i></span><span class="t"><i> clk,</i></span><span class="c"><i>//</i><svg class="cj"><use href="#g5"/></svg><svg class="cj"><use href="#g15"/></svg></span></p></div>
<div class="ln" style="top:216px"><b>13</b><p><span class="k"><i>input</i></span><span class="t"><i> night_key,</i></span><span class="c"><i>//</i><svg class="cj"><use href="#g16"/></svg><svg class="cj"><use href="#g17"/></svg><svg class="cj"><use href="#g18"/></svg><svg class="cj"><use href="#g19"/></svg></span></p></div>
<div class="ln" style="top:232px"><b>14</b><p></p></div>
<div class="ln" style="top:248px"><b>15</b><p><span class="k"><i>input</i></span><span class="t"><i> main_g_add,</i></span><span class="c"><i>//</i><svg class="cj"><use href="#g14"/></svg><svg class="cj"><use href="#g11"/></svg><svg class="cj"><use href="#g1"/></svg><svg class="cj"><use href="#g6"/></svg><svg class="cj"><use href="#g20"/></svg></span></p></div>
<div class="ln" style="top:264px"><b>16</b><p><span class="k"><i>input</i></span><span class="t"><i> main_g_sub,</i></span><span class="c"><i>//</i><svg class="cj"><use href="#g14"/></svg><svg class="cj"><use href="#g11"/></svg><svg class="cj"><use href="#g1"/></svg><svg class="cj"><use href="#g6"/></svg><svg class="cj"><use href="#g21"/></svg></span></p></div>
<div class="ln" style="top:280px"><b>17</b><p><span class="k"><i>input</i></span><span class="t"><i> branch_g_add,</i></span><span class="c"><i>//</i><svg class="cj"><use href="#g10"/></svg><svg class="cj"><use href="#g11"/></svg><svg class="cj"><use href="#g1"/></svg><svg class="cj"><use href="#g6"/></svg><svg class="cj"><use href="#g20"/></svg></span></p></div>
<div class="ln" style="top:296px"><b>18</b><p><span class="k"><i>input</i></span><span class="t"><i> branch_g_sub,</i></span><span class="c"><i>//</i><svg class="cj"><use href="#g10"/></svg><svg class="cj"><use href="#g11"/></svg><svg class="cj"><use href="#g1"/></svg><svg class="cj"><use href="#g6"/></svg><svg class="cj"><use href="#g21"/></svg></span></p></div>
<div class="ln" style="top:312px"><b>19</b><p></p></div>
<div class="ln" style="top:328px"><b>20</b><p><span class="k"><i>input</i></span><span class="t"><i> main_y_add,</i></span><span class="c"><i>//</i><svg class="cj"><use href="#g14"/></svg><svg class="cj"><use href="#g11"/></svg><svg class="cj"><use href="#g2"/></svg><svg class="cj"><use href="#g6"/></svg><svg class="cj"><use href="#g20"/></svg></span></p></div>
<div class="ln" style="top:344px"><b>21</b><p><span class="k"><i>input</i></span><span class="t"><i> main_y_sub,</i></span><span class="c"><i>//</i><svg class="cj"><use href="#g14"/></svg><svg class="cj"><use href="#g11"/></svg><svg class="cj"><use href="#g2"/></svg><svg class="cj"><use href="#g6"/></svg><svg class="cj"><use href="#g21"/></svg></span></p></div>
<div class="ln" style="top:360px"><b>22</b><p><span class="k"><i>input</i></span><span class="t"><i> branch_y_add,</i></span><span class="c"><i>//</i><svg class="cj"><use href="#g10"/></svg><svg class="cj"><use href="#g11"/></svg><svg class="cj"><use href="#g2"/></svg><svg class="cj"><use href="#g6"/></svg><svg class="cj"><use href="#g20"/></svg></span></p></div>
<div class="ln" style="top:376px"><b>23</b><p><span class="k"><i>input</i></span><span class="t"><i> branch_y_sub,</i></span><span class="c"><i>//</i><svg class="cj"><use href="#g10"/></svg><svg class="cj"><use href="#g11"/></svg><svg class="cj"><use href="#g2"/></svg><svg class="cj"><use href="#g6"/></svg><svg class="cj"><use href="#g21"/></svg></span></p></div>
<div class="ln" style="top:392px"><b>24</b><p><span class="c"><i>//led 1</i><svg class="cj"><use href="#g22"/></svg><i>0</i><svg class="cj"><use href="#g23"/></svg></span></p></div>
<div class="ln" style="top:408px"><b>25</b><p><span class="k"><i>output</i></span><span class="t"><i> main_red,</i></span><span class="c"><i>//</i><svg class="cj"><use href="#g14"/></svg><svg class="cj"><use href="#g11"/></svg><svg class="cj"><use href="#g6"/></svg></span></p></div>
<div class="ln" style="top:424px"><b>26</b><p><span class="k"><i>output</i></span><span class="t"><i> main_green,</i></span><span class="c"><i>//</i><svg class="cj"><use href="#g14"/></svg><svg class="cj"><use href="#g11"/></svg><svg class="cj"><use href="#g6"/></svg></span></p></div>
<div class="ln" style="top:440px"><b>27</b><p><span class="k"><i>output</i></span><span class="t"><i> main_yellow,</i></span><span class="c"><i>//</i><svg class="cj"><use href="#g14"/></svg><svg class="cj"><use href="#g11"/></svg><svg class="cj"><use href="#g6"/></svg></span></p></div>
<div class="ln" style="top:456px"><b>28</b><p></p></div>
<div class="ln" style="top:472px"><b>29</b><p><span class="k"><i>output</i></span><span class="t"><i> branch_red,</i></span><span class="c"><i>//</i><svg class="cj"><use href="#g10"/></svg><svg class="cj"><use href="#g11"/></svg><svg class="cj"><use href="#g6"/></svg></span></p></div>
<div class="ln" style="top:488px"><b>30</b><p><span class="k"><i>output</i></span><span class="t"><i> branch_green,</i></span><span class="c"><i>//</i><svg class="cj"><use href="#g10"/></svg><svg class="cj"><use href="#g11"/></svg><svg class="cj"><use href="#g6"/></svg></span></p></div>
<div class="ln" style="top:504px"><b>31</b><p><span class="k"><i>output</i></span><span class="t"><i> branch_yellow,</i></span><span class="c"><i>//</i><svg class="cj"><use href="#g10"/></svg><svg class="cj"><use href="#g11"/></svg><svg class="cj"><use href="#g6"/></svg></span></p></div>
<div class="ln" style="top:520px"><b>32</b><p></p></div>
<div class="ln" style="top:536px"><b>33</b><p><span class="k"><i>output</i></span><span class="t"><i> [3:0] weixuan,</i></span><span class="c"><i>//</i><svg class="cj"><use href="#g24"/></svg><svg class="cj"><use href="#g25"/></svg><svg class="cj"><use href="#g26"/></svg><svg class="cj"><use href="#g27"/></svg><svg class="cj"><use href="#g28"/></svg></span></p></div>
<div class="ln" style="top:552px"><b>34</b><p><span class="k"><i>output</i></span><span class="t"><i> [7:0] duanxian</i></span><span class="c"><i>//</i><svg class="cj"><use href="#g24"/></svg><svg class="cj"><use href="#g25"/></svg><svg class="cj"><use href="#g26"/></svg><svg class="cj"><use href="#g29"/></svg><svg class="cj"><use href="#g28"/></svg></span></p></div>
<div class="ln" style="top:568px"><b>35</b><p><span class="t"><i>);</i></span></p></div>
<div class="ln" style="top:584px"><b>36</b><p></p></div>
<div class="ln" style="top:600px"><b>37</b><p><span class="t"><i> </i></span><span class="k"><i>wire</i></span><span class="t"><i> clk_1Hz;</i></span></p></div>
<div class="ln" style="top:616px"><b>38</b><p><span class="t"><i> </i></span><span class="k"><i>wire</i></span><span class="t"><i> [7:0] main_green_BCD;</i></span></p></div>
<div class="ln" style="top:632px"><b>39</b><p><span class="t"><i> </i></span><span class="k"><i>wire</i></span><span class="t"><i> [7:0] main_yellow_BCD;</i></span></p></div>
<div class="ln" style="top:648px"><b>40</b><p><span class="t"><i> </i></span><span class="k"><i>wire</i></span><span class="t"><i> [7:0] main_red_BCD;</i></span></p></div>
<div class="ln" style="top:664px"><b>41</b><p><span class="t"><i> </i></span><span class="k"><i>wire</i></span><span class="t"><i> [7:0] branch_green_BCD;</i></span></p></div>
<div class="ln" style="top:680px"><b>42</b><p><span class="t"><i> </i></span><span class="k"><i>wire</i></span><span class="t"><i> [7:0] branch_yellow_BCD;</i></span></p></div>
<div class="a" style="left:663px;top:360px;width:1px;height:16px;background:#000"></div>
<div class="a" style="left:374px;top:698px;width:782px;height:17px;background:#ececec;border-top:1px solid #e2e2e2"></div>
<div class="a" style="left:393px;top:699px;width:132px;height:15px;border:1px solid #9b9b9b;border-radius:2px;background:linear-gradient(#f6f6f6,#dcdcdc)"></div>

<!-- ===== bottom tabs ===== -->
<div class="a" style="left:2px;top:716px;width:68px;height:17px;border-left:1px solid #a0a0a0;background:linear-gradient(#e4e4e4,#d4d4d4)"></div>
<div class="a" style="left:0;top:715px;width:342px;height:1px;background:#8a8f96"></div>
<div class="a" style="left:70px;top:716px;width:82px;height:17px;background:#fff;border-left:1px solid #c8c8c8;border-right:1px solid #c8c8c8"></div>
<div class="a" style="left:152px;top:716px;width:70px;height:17px;border-right:1px solid #a0a0a0;background:linear-gradient(#e4e4e4,#d4d4d4)"></div>
<div class="a" style="left:222px;top:716px;width:94px;height:17px;border-left:1px solid #a0a0a0;border-right:1px solid #a0a0a0;background:linear-gradient(#e4e4e4,#d4d4d4)"></div>
<div class="a mono" style="left:33px;top:722px">Start</div>
<div class="a mono" style="left:105px;top:723px">Design</div>
<div class="a mono" style="left:183px;top:722px">Files</div>
<div class="a mono" style="left:254px;top:722px">Libraries</div>
<div class="a" style="left:346px;top:716px;width:526px;height:17px;border-top:1px solid #a0a0a0;border-left:1px solid #a0a0a0;border-right:1px solid #a0a0a0;background:linear-gradient(#f2f2f2,#d6d6d6)"></div>
<div class="a" style="left:872px;top:716px;width:284px;height:17px;border-top:1px solid #a0a0a0;background:linear-gradient(#fafafa,#e6e6e6)"></div>
<div class="a" style="left:849px;top:718px;width:15px;height:15px;border:1px solid #b8b8b8;background:linear-gradient(#b8b8b8,#a0a0a0)"></div>
<svg class="a" style="left:852px;top:721px" width="9" height="9"><path d="M1.5 1.5l6 6M7.5 1.5l-6 6" stroke="#fff" stroke-width="2"/></svg>
<div class="a mono" style="left:565px;top:722px">Design Summary</div>
<div class="a mono" style="left:1089px;top:722px">traffic light.v</div>
<svg class="a" style="left:284px;top:24px" width="11" height="9" viewBox="0 0 11 9"><path d="M1 4.5h9" stroke="#000" stroke-width="1.2"/><path d="M0 4.5l3-3v6zM11 4.5l-3-3v6z" fill="#000"/></svg>
<svg class="a" style="left:299px;top:23px" width="10" height="10" viewBox="0 0 10 10"><rect x="1" y="1" width="8" height="8" fill="none" stroke="#000" stroke-width="1.3"/><path d="M1 2h8" stroke="#000" stroke-width="1.5"/></svg>
<svg class="a" style="left:314px;top:24px" width="9" height="9" viewBox="0 0 9 9"><rect x="3" y="1" width="5" height="4" fill="none" stroke="#000" stroke-width="1.3"/><rect x="0.7" y="4" width="5" height="4.5" fill="#f0f0f0" stroke="#000" stroke-width="1.3"/></svg>
<svg class="a" style="left:330px;top:24px" width="9" height="9" viewBox="0 0 9 9"><path d="M1 1l7 7M8 1L1 8" stroke="#000" stroke-width="1.6"/></svg>
<svg class="a" style="left:68px;top:44px" width="13" height="13" viewBox="0 0 13 13"><circle cx="6.5" cy="6.5" r="5.6" fill="#f6f6f6" stroke="#8c8c8c" stroke-width="1"/><circle cx="6.5" cy="6.5" r="4.4" fill="none" stroke="#e4e4e4" stroke-width="1"/><circle cx="6.5" cy="6.5" r="3.1" fill="url(#gradio)" stroke="#0d2f5c" stroke-width="1.1"/></svg>
<svg class="a" style="left:88px;top:43px" width="16" height="16" viewBox="0 0 16 16"><rect x="2.75" y="2.75" width="10.5" height="10.5" fill="#fbfbff" stroke="#0a0a0a" stroke-width="1.5"/><path d="M3.5 0v2.5M3.5 13.5V16M0 3.5h2.5M13.5 3.5H16" stroke="#111" stroke-width="1"/><path d="M8 0v2.5M8 13.5V16M0 8h2.5M13.5 8H16" stroke="#111" stroke-width="1"/><path d="M12.5 0v2.5M12.5 13.5V16M0 12.5h2.5M13.5 12.5H16" stroke="#111" stroke-width="1"/><g transform="translate(4,4) scale(.5)"><g fill="#1a74cc"><path d="M7.2 13.6A6.2 6.2 0 0 1 3.6 4.2" fill="none" stroke="#1a74cc" stroke-width="2.4"/><path d="M1.2 1.2H7.6V7.4z"/><path d="M9.8 1.4A6.2 6.2 0 0 1 13.4 10.8" fill="none" stroke="#1a74cc" stroke-width="2.4"/><path d="M15.8 13.8H9.4V7.6z"/></g></g></svg>
<svg class="a" style="left:197px;top:45px" width="13" height="13" viewBox="0 0 13 13"><circle cx="6.5" cy="6.5" r="5.6" fill="#f6f6f6" stroke="#8c8c8c" stroke-width="1"/><circle cx="6.5" cy="6.5" r="4.4" fill="none" stroke="#e4e4e4" stroke-width="1"/></svg>
<svg class="a" style="left:217px;top:43px" width="16" height="16" viewBox="0 0 16 16"><rect x=".5" y=".5" width="15" height="15" fill="#5a8ad8" stroke="#3a5a98" stroke-width="1"/><rect x="1" y="1" width="14" height="6" fill="#a8c8f0"/><path d="M1 5h5l1-2h3" stroke="#fff" stroke-width=".8" fill="none"/><circle cx="11" cy="7" r="3.2" fill="#d8d8d8" stroke="#444" stroke-width="1"/><path d="M11 5v2.5" stroke="#333" stroke-width="1"/><rect x="1" y="11" width="14" height="4.5" fill="#163a88"/><text x="1.5" y="15.3" font-family="Liberation Sans" font-weight="bold" font-size="5.5" fill="#fff">ISim</text></svg>
<svg class="a" style="left:33px;top:372px" width="6" height="8" viewBox="0 0 6 8"><path d="M1 4l4-3.5v7z" fill="#404040"/></svg>
<svg class="a" style="left:330px;top:372px" width="6" height="8" viewBox="0 0 6 8"><path d="M5 4L1 .5v7z" fill="#404040"/></svg>
<svg class="a" style="left:380px;top:702px" width="6" height="8" viewBox="0 0 6 8"><path d="M1 4l4-3.5v7z" fill="#404040"/></svg>
<div class="a" style="left:113px;top:387px;width:108px;height:2px;background:repeating-linear-gradient(90deg,#b0b0b0 0 1px,#fff 1px 2px,transparent 2px 5px)"></div>
<div class="a" style="left:344px;top:250px;width:2px;height:261px;background:repeating-linear-gradient(#b0b0b0 0 1px,#fff 1px 2px,transparent 2px 5px)"></div>
<div class="a" style="left:889px;top:20px;width:267px;height:2px;background:repeating-linear-gradient(90deg,#b0b0b0 0 1px,#fff 1px 2px,transparent 2px 5px)"></div>
<svg class="a" style="left:32px;top:398px" width="16" height="16" viewBox="0 0 16 16"><g fill="#1a74cc"><path d="M7.2 13.6A6.2 6.2 0 0 1 3.6 4.2" fill="none" stroke="#1a74cc" stroke-width="2.4"/><path d="M1.2 1.2H7.6V7.4z"/><path d="M9.8 1.4A6.2 6.2 0 0 1 13.4 10.8" fill="none" stroke="#1a74cc" stroke-width="2.4"/><path d="M15.8 13.8H9.4V7.6z"/></g></svg>
<svg class="a" style="left:6px;top:718px" width="16" height="16" viewBox="0 0 16 16"><path d="M0 1h8l8 7-8 7H0l8-7z" fill="#c8c830"/><path d="M0 15l8-7h8l-8 7z" fill="#8a8a10"/></svg>
<svg class="a" style="left:78px;top:719px" width="16" height="16" viewBox="0 0 16 16"><rect x="1.5" y="2.5" width="6" height="5" fill="#fff" stroke="#2a4ab8"/><path d="M3 4.5h3M3 6h3" stroke="#2a4ab8" stroke-width=".8"/><path d="M8 5h3M10 5v7h2" fill="none" stroke="#2a4ab8" stroke-width="1"/><path d="M13 2l2.2 2.2-2.2 2.2-2.2-2.2z" fill="#30b050" stroke="#208040" stroke-width=".5"/><path d="M13 10l2.2 2.2-2.2 2.2-2.2-2.2z" fill="#e050a0" stroke="#a03070" stroke-width=".5"/></svg>
<svg class="a" style="left:158px;top:717px" width="16" height="17" viewBox="0 0 16 17"><path d="M1.5 .5h6l2 2v9h-8z" fill="#e8f0fc" stroke="#4a78d0" stroke-width="1"/><path d="M3.5 2.5h6l2 2v9h-8z" fill="#eef4fd" stroke="#4a78d0" stroke-width="1"/><path d="M5.5 4.5h6l3 3v9h-9z" fill="#f4f8ff" stroke="#4a78d0" stroke-width="1"/></svg>
<svg class="a" style="left:229px;top:717px" width="16" height="17" viewBox="0 0 16 17"><path d="M1.5 .5h6l2 2v9h-8z" fill="#e8f0fc" stroke="#4a78d0" stroke-width="1"/><path d="M3.5 2.5h6l2 2v9h-8z" fill="#eef4fd" stroke="#4a78d0" stroke-width="1"/><path d="M5.5 4.5h6l3 3v9h-9z" fill="#ffe060" stroke="#4a78d0" stroke-width="1"/></svg>
<svg class="a" style="left:354px;top:719px" width="14" height="14" viewBox="0 0 16 16"><path d="M2.5 2h10.5v3h-1l-.8-1.6H6l3.6 4.6L5.8 12.4h5.4l.9-1.6h1V14H2.5v-.8L7 8 2.5 2.8z" fill="#9fe0b0" stroke="#1f9e4f" stroke-width=".9"/></svg>
<svg class="a" style="left:877px;top:717px" width="16" height="17" viewBox="0 0 16 17"><path d="M1.5 .5h9l3 3v13h-12z" fill="#fff" stroke="#2a5ac8" stroke-width="1.2"/><path d="M3.5 6h8M3.5 8.5h8M3.5 11h8M3.5 13.5h8" stroke="#2a5ac8" stroke-width="1"/></svg><div class="a" style="left:100px;top:373px;width:1px;height:6px;background:#555"></div><div class="a" style="left:101px;top:373px;width:1px;height:6px;background:#fff"></div><div class="a" style="left:103px;top:373px;width:1px;height:6px;background:#555"></div><div class="a" style="left:104px;top:373px;width:1px;height:6px;background:#fff"></div><div class="a" style="left:106px;top:373px;width:1px;height:6px;background:#555"></div><div class="a" style="left:107px;top:373px;width:1px;height:6px;background:#fff"></div><div class="a" style="left:455px;top:703px;width:1px;height:6px;background:#555"></div><div class="a" style="left:456px;top:703px;width:1px;height:6px;background:#fff"></div><div class="a" style="left:458px;top:703px;width:1px;height:6px;background:#555"></div><div class="a" style="left:459px;top:703px;width:1px;height:6px;background:#fff"></div><div class="a" style="left:461px;top:703px;width:1px;height:6px;background:#555"></div><div class="a" style="left:462px;top:703px;width:1px;height:6px;background:#fff"></div>
</body></html>
